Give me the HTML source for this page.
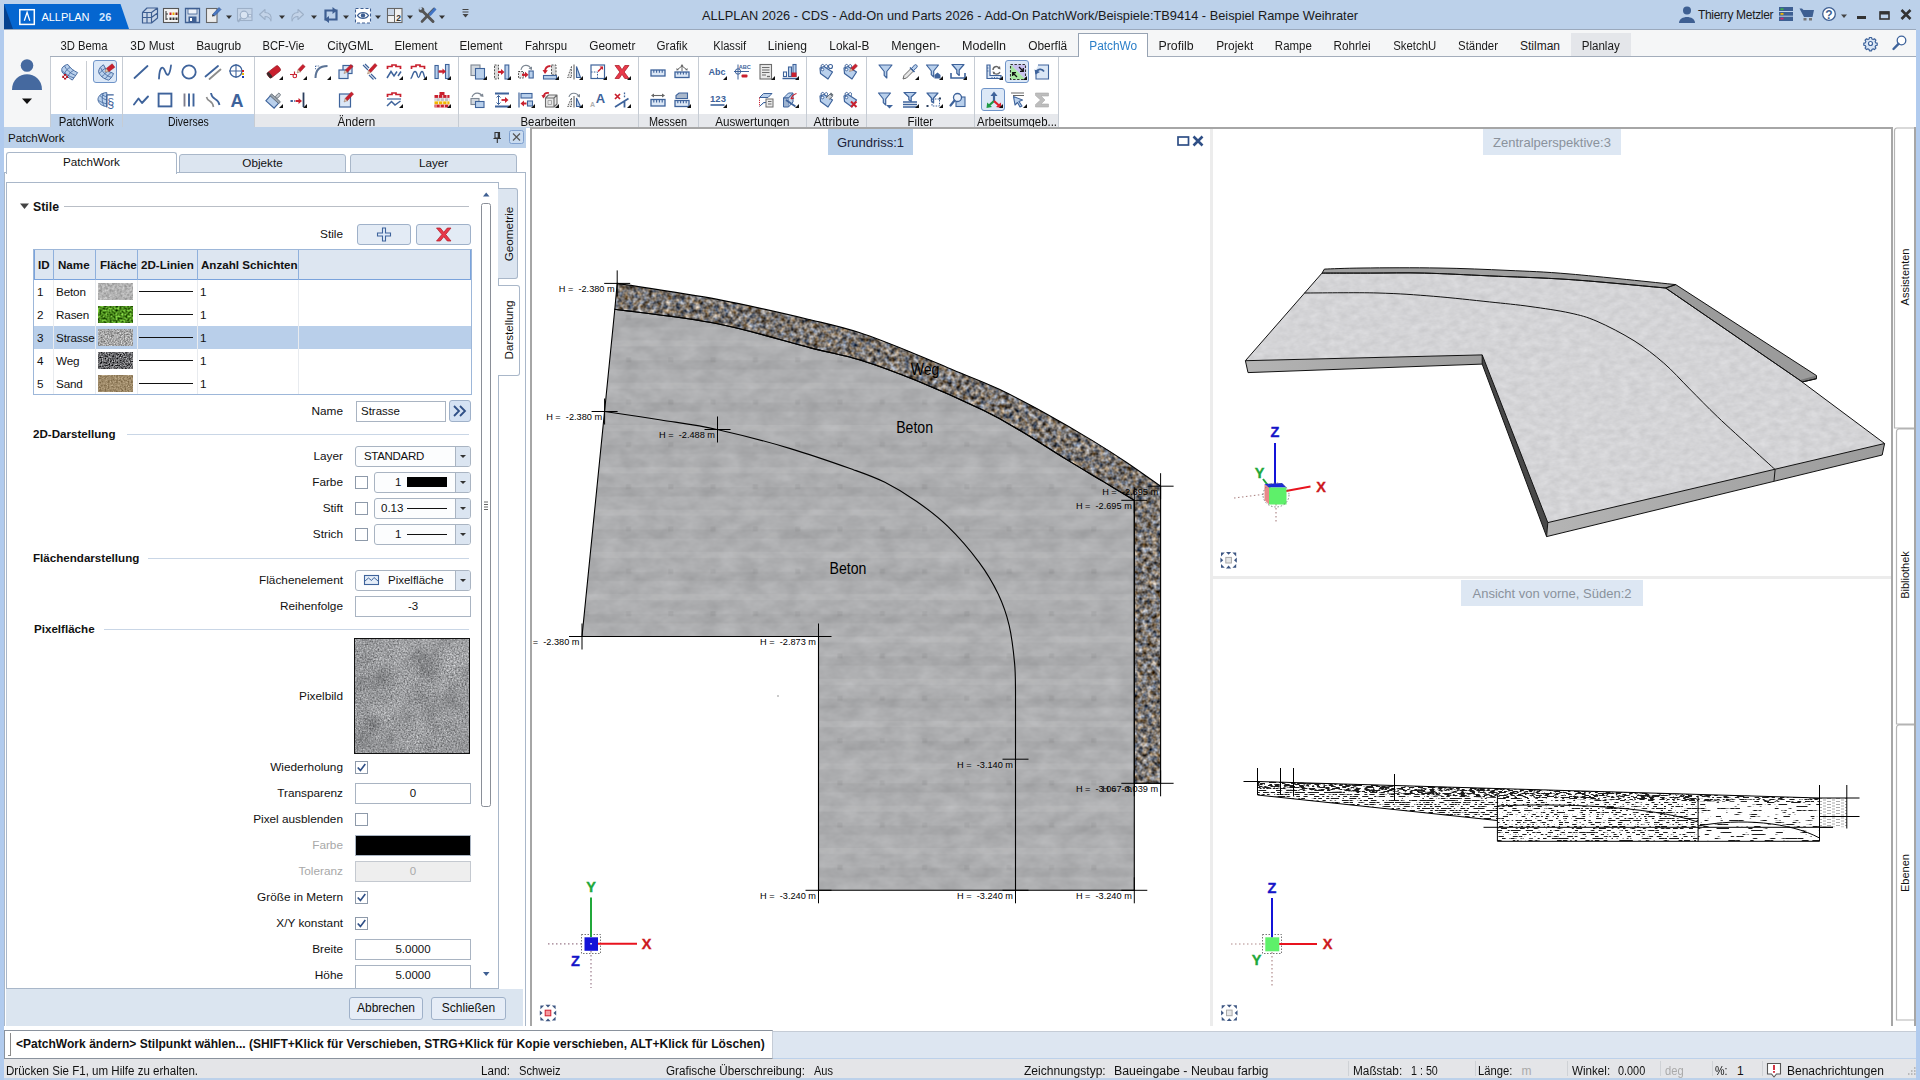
<!DOCTYPE html>
<html lang="de"><head><meta charset="utf-8"><title>ALLPLAN 2026</title>
<style>
*{box-sizing:border-box;margin:0;padding:0}
html,body{width:1920px;height:1080px;overflow:hidden}
body{position:relative;background:#bcd1ea;font-family:"Liberation Sans",sans-serif;font-size:11.7px;color:#111;line-height:14px}
.a{position:absolute}
.t{position:absolute;white-space:nowrap}
svg{position:absolute;overflow:visible}
svg.vp{overflow:hidden}
.tr{position:absolute;white-space:nowrap;font-size:11.7px;letter-spacing:-0.15px}
/* title */
#title{left:0;top:0;width:1920px;height:30px;background:#bcd1ea}
#ttxt{left:702px;top:9px;font-size:12.8px;color:#1a1a1a}
/* ribbon */
#tabs{left:4px;top:29px;width:1912px;height:28px;background:#f5f6f7;border-top:1px solid #9ba9bc}
.rt{position:absolute;top:39px;font-size:12px;white-space:nowrap;text-align:center;color:#1a1a1a}
#rib{left:4px;top:57px;width:1912px;height:70px;background:#fff}
.gl{position:absolute;top:114px;height:13px;background:#e6e8ec;font-size:12px;text-align:center;line-height:16px;white-space:nowrap;color:#111;overflow:visible}
.gs{position:absolute;top:57px;width:1px;height:70px;background:#c6ccd4}
/* panel */
.lbl{position:absolute;white-space:nowrap;text-align:right;width:160px;left:183px;font-size:11.8px;color:#111}
.inp{position:absolute;background:#fff;border:1px solid #a9b4c2;font-size:11.5px;text-align:center;line-height:19px;height:21px}
.cmb{position:absolute;background:#fcfdfe;border:1px solid #a9b4c2;border-radius:3px;font-size:11.5px;height:21px;line-height:19px}
.cmb i{position:absolute;right:0;top:0;width:15px;height:19px;background:#dbe5f1;border-left:1px solid #a9b4c2;border-radius:0 2px 2px 0}
.cmb i:after{content:"";position:absolute;left:4px;top:8px;border:3px solid transparent;border-top:3px solid #333;border-bottom:0}
.cb{position:absolute;width:13px;height:13px;border:1px solid #8e9aaa;background:#fff}
.hd{position:absolute;font-weight:bold;font-size:11.6px;white-space:nowrap;color:#111}
.hl{position:absolute;height:1px;background:#c9d6e6}
.btn{position:absolute;border:1px solid #9fb1c9;border-radius:3px;background:#e3ebf5;text-align:center;font-size:12px}
/* status */
.st{position:absolute;top:1064px;font-size:12px;white-space:nowrap;color:#111}
.vt{position:absolute;font-size:13px;white-space:nowrap;text-align:center;height:25.5px;line-height:27px}
</style></head><body>
<div class="a" id="title"></div>
<div class="a" style="left:0;top:30px;width:4px;height:1050px;background:#b1cbee"></div><div class="a" style="left:1916px;top:30px;width:4px;height:1050px;background:#b1cbee"></div>
<svg style="left:0;top:0" width="140" height="30" viewBox="0 0 140 30"><path d="M4 4 H120.500 L129 29 H4 Z" fill="#0566d0"/><path d="M4 4 L13 29 H4 Z" fill="#06428f"/><rect x="19.800" y="9.700" width="14.500" height="14.700" fill="none" stroke="#fff" stroke-width="1.500"/><path d="M24.300 20.700 L27.100 12.400 L29.800 20.700" fill="none" stroke="#fff" stroke-width="1.300"/><text x="41.500" y="20.800" font-family="Liberation Sans,sans-serif" font-size="11" fill="#fff" textLength="48" lengthAdjust="spacing">ALLPLAN</text><text x="99" y="20.800" font-family="Liberation Sans,sans-serif" font-size="11" font-weight="bold" fill="#d4e8ff" textLength="12.300" lengthAdjust="spacing">26</text></svg>
<svg style="left:0;top:0" width="500" height="30" viewBox="0 0 500 30"><path d="M142.500 12.500 H151.500 V23 H142.500 Z M142.500 12.500 L147 8 H157.500 V18 L151.500 23 M151.500 12.500 L157.500 8 M142.500 17.500 H151.500 M147 12.500 V23 M151.500 17.500 L157.500 13" fill="#c9d6e8" stroke="#3e5f92" stroke-width="1.2" stroke-linejoin="round"/><rect x="163.500" y="8.500" width="15" height="14" fill="#f4f4f4" stroke="#555" stroke-width="1.1"/><path d="M166 11 V20 M166 14 h2 M166 19 h2" stroke="#333" stroke-width="1"/><rect x="169.500" y="12.500" width="2" height="2.500" fill="#c22"/><rect x="172.500" y="12.500" width="2" height="2.500" fill="#e8a800"/><rect x="175.500" y="12.500" width="2" height="2.500" fill="#7a1b1b"/><rect x="169.500" y="17.500" width="2" height="2.500" fill="#333"/><rect x="172.500" y="17.500" width="2" height="2.500" fill="#333"/><rect x="175.500" y="17.500" width="2" height="2.500" fill="#333"/><path d="M185.500 8.500 H199.500 V22.500 H185.500 Z" fill="#c9d6e8" stroke="#3e5f92" stroke-width="1.3"/><rect x="188" y="9" width="9" height="5" fill="#eef2f8" stroke="#3e5f92" stroke-width=".8"/><rect x="188.500" y="16.500" width="8" height="6" fill="#3e5f92"/><rect x="190" y="18" width="2" height="3" fill="#fff"/><rect x="206.500" y="8.500" width="10.500" height="14" fill="#ececec" stroke="#666" stroke-width="1.1"/><path d="M212.500 14.500 L219 7.500 L221 9.500 L214.500 16 Z" fill="#4a78c2" stroke="#2b4f8d" stroke-width=".6"/><path d="M212 16.500 l.5 -2 l2 1.500 z" fill="#222"/><path d="M226 15.5 h6 l-3 3.5 z" fill="#333"/><rect x="237.500" y="8.500" width="14.500" height="12" fill="#c6d5e8" stroke="#9db0c8" stroke-width="1.1"/><circle cx="244" cy="15" r="3.800" fill="#d9e4f2" stroke="#9db0c8" stroke-width="1.2"/><path d="M241 18 L238 22" stroke="#9db0c8" stroke-width="2"/><rect x="248.500" y="14.500" width="3" height="2.500" fill="#d9e4f2" stroke="#9db0c8" stroke-width=".8"/><path d="M259.500 14.500 L265 9.500 V12.500 C270 12.500,272 16,271 21 C270 17.500,268 16.500,265 16.500 V19.500 Z" fill="#c3d3e8" stroke="#9db0c8" stroke-width="1.1" stroke-linejoin="round"/><path d="M279 15.5 h6 l-3 3.5 z" fill="#333"/><path d="M303.500 14.500 L298 9.500 V12.500 C293 12.500,291 16,292 21 C293 17.500,295 16.500,298 16.500 V19.500 Z" fill="#c3d3e8" stroke="#9db0c8" stroke-width="1.1" stroke-linejoin="round"/><path d="M311 15.5 h6 l-3 3.5 z" fill="#333"/><path d="M334 10.500 H325.500 V19.500 H328" fill="none" stroke="#3e5f92" stroke-width="2.200"/><path d="M327 19.500 H336 V10.500 H333" fill="none" stroke="#3e5f92" stroke-width="2.200" transform="translate(0.500 0)"/><path d="M332.500 7 L337 10.500 L332.500 14 Z M329 16 L324.500 19.500 L329 23 Z" fill="#3e5f92"/><path d="M343 15.5 h6 l-3 3.5 z" fill="#333"/><rect x="355.500" y="8.500" width="15" height="14.500" fill="#fff" stroke="#3e5f92" stroke-width="1.1" stroke-dasharray="3 2"/><path d="M357.500 15.500 C360 11.500,366 11.500,368.500 15.500 C366 19.500,360 19.500,357.500 15.500 Z" fill="none" stroke="#3e5f92" stroke-width="1.2"/><circle cx="363" cy="15.500" r="2.200" fill="#3e5f92"/><path d="M375 15.5 h6 l-3 3.5 z" fill="#333"/><rect x="387.500" y="8.500" width="14.500" height="14" fill="#f1f1f1" stroke="#666" stroke-width="1.1"/><path d="M394.500 8.500 V22.500 M387.500 15.500 H394.500" stroke="#666" stroke-width="1"/><rect x="388" y="9" width="6" height="6" fill="#c9d6e8"/><text x="398.500" y="21" font-family="Liberation Sans,sans-serif" font-size="8.500" font-weight="bold" text-anchor="middle" fill="#333">2</text><path d="M407 15.5 h6 l-3 3.5 z" fill="#333"/><path d="M420.500 9 L433 21.500" stroke="#555" stroke-width="3" stroke-linecap="round"/><path d="M434 9 L422 21.500" stroke="#555" stroke-width="2.600" stroke-linecap="round"/><path d="M428.500 14 L434.500 7.500 L436.500 9.500 L430.500 16 Z" fill="#3f73c4"/><circle cx="421.500" cy="10" r="2.800" fill="#555"/><circle cx="420.500" cy="8.500" r="1.400" fill="#bcd1ea"/><path d="M439 15.5 h6 l-3 3.5 z" fill="#333"/><path d="M462.500 9.500 H468.500 M462.500 12 H468.500" stroke="#444" stroke-width="1.1"/><path d="M462.5 14.0 h6 l-3 3.5 z" fill="#444"/></svg>
<div class="t" id="ttxt">ALLPLAN 2026 - CDS - Add-On und Parts 2026 - Add-On PatchWork/Beispiele:TB9414 - Beispiel Rampe Weihrater</div>
<svg style="left:1660px;top:0" width="260" height="30" viewBox="1660 0 260 30"><circle cx="1687" cy="10.500" r="4" fill="#3e5f92"/><path d="M1679 23 C1679 15,1695 15,1695 23 Z" fill="#3e5f92"/><rect x="1779" y="7" width="14" height="14" fill="#3e5f92"/><path d="M1779 11.500 H1793 M1779 16.200 H1793" stroke="#bcd1ea" stroke-width="1"/><rect x="1780.500" y="8.300" width="3" height="1.800" fill="#3fae49"/><rect x="1780.500" y="13" width="3" height="1.800" fill="#f0b400"/><rect x="1780.500" y="17.700" width="3" height="1.800" fill="#d6246e"/><path d="M1799.500 8.500 H1802 L1803.500 10 H1814 L1812.500 17 H1804 Z" fill="#3e5f92"/><rect x="1803.500" y="18" width="3" height="2.500" fill="#777"/><rect x="1809" y="18" width="3" height="2.500" fill="#777"/><circle cx="1829" cy="14" r="6.300" fill="#fff" stroke="#3e5f92" stroke-width="1.300"/><text x="1829" y="18.500" font-family="Liberation Sans,sans-serif" font-size="12" font-weight="bold" text-anchor="middle" fill="#3e5f92">?</text><path d="M1841 14.5 h6 l-3 3.5 z" fill="#444"/><rect x="1857" y="16" width="9" height="3" fill="#333"/><rect x="1880" y="12" width="9" height="7" fill="none" stroke="#333" stroke-width="1.600"/><rect x="1880" y="11.500" width="9" height="3" fill="#333"/><path d="M1901.500 10 L1910.500 19 M1910.500 10 L1901.500 19" stroke="#333" stroke-width="2.600"/></svg>
<div class="t" style="left:1698px;top:8px;font-size:12px;letter-spacing:-0.32px;color:#1a1a1a">Thierry Metzler</div>
<div class="a" id="tabs"></div>
<div class="a" style="left:50px;top:56px;width:1866px;height:1px;background:#a3adbb"></div>
<div class="a" style="left:1571px;top:33px;width:60px;height:23px;background:#e4e6ea"></div>
<div class="a" style="left:1078px;top:33px;width:70px;height:24px;background:#fff;border:1px solid #97a3b3;border-bottom:0"></div>
<div class="rt" style="left:41px;width:87px"><span style="display:inline-block;transform:scaleX(0.940)">3D Bema</span></div>
<div class="rt" style="left:110px;width:84px"><span style="display:inline-block;transform:scaleX(0.985)">3D Must</span></div>
<div class="rt" style="left:176px;width:85px"><span style="display:inline-block;transform:scaleX(0.992)">Baugrub</span></div>
<div class="rt" style="left:243px;width:82px"><span style="display:inline-block;transform:scaleX(0.931)">BCF-Vie</span></div>
<div class="rt" style="left:307px;width:86px"><span style="display:inline-block;transform:scaleX(0.986)">CityGML</span></div>
<div class="rt" style="left:375px;width:83px"><span style="display:inline-block;transform:scaleX(0.977)">Element</span></div>
<div class="rt" style="left:440px;width:83px"><span style="display:inline-block;transform:scaleX(0.977)">Element</span></div>
<div class="rt" style="left:505px;width:82px"><span style="display:inline-block;transform:scaleX(0.954)">Fahrspu</span></div>
<div class="rt" style="left:569px;width:86px"><span style="display:inline-block;transform:scaleX(0.985)">Geometr</span></div>
<div class="rt" style="left:637px;width:71px"><span style="display:inline-block;transform:scaleX(0.969)">Grafik</span></div>
<div class="rt" style="left:693px;width:73px"><span style="display:inline-block;transform:scaleX(0.934)">Klassif</span></div>
<div class="rt" style="left:748px;width:79px"><span style="display:inline-block;transform:scaleX(1.008)">Linieng</span></div>
<div class="rt" style="left:809px;width:80px"><span style="display:inline-block;transform:scaleX(0.983)">Lokal-B</span></div>
<div class="rt" style="left:871px;width:89px"><span style="display:inline-block;transform:scaleX(1.035)">Mengen-</span></div>
<div class="rt" style="left:942px;width:84px"><span style="display:inline-block;transform:scaleX(1.047)">Modelln</span></div>
<div class="rt" style="left:1008px;width:79px"><span style="display:inline-block;transform:scaleX(0.991)">Oberflä</span></div>
<div class="rt" style="left:1069px;width:88px;color:#2a7ec8"><span style="display:inline-block;transform:scaleX(0.990)">PatchWo</span></div>
<div class="rt" style="left:1139px;width:75px"><span style="display:inline-block;transform:scaleX(1.029)">Profilb</span></div>
<div class="rt" style="left:1196px;width:77px"><span style="display:inline-block;transform:scaleX(0.991)">Projekt</span></div>
<div class="rt" style="left:1255px;width:77px"><span style="display:inline-block;transform:scaleX(0.956)">Rampe</span></div>
<div class="rt" style="left:1314px;width:77px"><span style="display:inline-block;transform:scaleX(0.973)">Rohrlei</span></div>
<div class="rt" style="left:1373px;width:83px"><span style="display:inline-block;transform:scaleX(0.948)">SketchU</span></div>
<div class="rt" style="left:1438px;width:80px"><span style="display:inline-block;transform:scaleX(0.952)">Ständer</span></div>
<div class="rt" style="left:1500px;width:80px"><span style="display:inline-block;transform:scaleX(1.000)">Stilman</span></div>
<div class="rt" style="left:1562px;width:78px"><span style="display:inline-block;transform:scaleX(0.966)">Planlay</span></div>
<svg style="left:1860px;top:33px" width="52" height="22" viewBox="1860 33 52 22"><g fill="#dbe7f6" stroke="#3e639b" stroke-width="1.400" transform="translate(1870.500 43.500) scale(.86) translate(-1870.500 -43.500)"><path d="M1869.300 36.500 h2.400 l.4 1.700 l1.500 .7 l1.500 -.9 l1.700 1.700 l-.9 1.500 l.7 1.500 l1.700 .4 v2.400 l-1.700 .4 l-.7 1.500 l.9 1.500 l-1.700 1.700 l-1.500 -.9 l-1.500 .7 l-.4 1.700 h-2.400 l-.4 -1.700 l-1.500 -.7 l-1.500 .9 l-1.700 -1.700 l.9 -1.500 l-.7 -1.500 l-1.700 -.4 v-2.400 l1.700 -.4 l.7 -1.500 l-.9 -1.500 l1.700 -1.700 l1.500 .9 l1.500 -.7 z" stroke-linejoin="round"/><circle cx="1870.500" cy="43.500" r="2.300" fill="#fff"/></g><circle cx="1901.500" cy="40.500" r="4.300" fill="#fff" stroke="#3e639b" stroke-width="1.300"/><path d="M1898.500 43.800 L1893.500 49" stroke="#3e639b" stroke-width="2.400" stroke-linecap="round"/></svg>
<div class="a" id="rib"></div>
<div class="a" style="left:4px;top:57px;width:46px;height:70px;background:#f5f6f7"></div>
<svg style="left:4px;top:58px" width="46" height="69" viewBox="4 58 46 69"><circle cx="27" cy="65.500" r="6.300" fill="#45699f"/><path d="M12 90 C12 69,42 69,42 90 Z" fill="#45699f"/><path d="M22 98.500 H32 L27 104 Z" fill="#111"/></svg>
<div class="gl" style="left:50px;width:72px;background:#bcd1ea"><span style="display:inline-block;transform:scaleX(0.944)">PatchWork</span></div>
<div class="gs" style="left:122px"></div>
<div class="gl" style="left:123px;width:131px;background:#bcd1ea"><span style="display:inline-block;transform:scaleX(0.874)">Diverses</span></div>
<div class="gs" style="left:254px"></div>
<div class="gl" style="left:255px;width:203px"><span style="display:inline-block;transform:scaleX(0.969)">Ändern</span></div>
<div class="gs" style="left:458px"></div>
<div class="gl" style="left:459px;width:179px"><span style="display:inline-block;transform:scaleX(0.948)">Bearbeiten</span></div>
<div class="gs" style="left:638px"></div>
<div class="gl" style="left:639px;width:59px"><span style="display:inline-block;transform:scaleX(0.907)">Messen</span></div>
<div class="gs" style="left:698px"></div>
<div class="gl" style="left:699px;width:107px"><span style="display:inline-block;transform:scaleX(0.970)">Auswertungen</span></div>
<div class="gs" style="left:806px"></div>
<div class="gl" style="left:807px;width:59px"><span style="display:inline-block;transform:scaleX(1.023)">Attribute</span></div>
<div class="gs" style="left:866px"></div>
<div class="gl" style="left:867px;width:107px"><span style="display:inline-block;transform:scaleX(0.960)">Filter</span></div>
<div class="gs" style="left:974px"></div>
<div class="gl" style="left:975px;width:83px"><span style="display:inline-block;transform:scaleX(0.952)">Arbeitsumgeb...</span></div>
<div class="gs" style="left:1058px"></div>
<div class="gs" style="left:50px"></div>
<div class="gs" style="left:86px;top:61px;height:49px;background:#c9cdd3"></div>
<div class="a" style="left:93px;top:60px;width:24px;height:23px;background:#dce8f7;border:1px solid #6f94c8;border-radius:3px"></div>
<div class="a" style="left:1005px;top:60px;width:24px;height:23px;background:#dce8f7;border:1px solid #6f94c8;border-radius:3px"></div>
<div class="a" style="left:981px;top:88px;width:24px;height:23px;background:#dce8f7;border:1px solid #6f94c8;border-radius:3px"></div>
<svg style="left:57.8px;top:61.5px" width="20.0" height="20.0" viewBox="0 0 20 20"><path d="M3.9 6.5 C5 4,8 2.5,9.9 2.5 C12 6,16 9,19.6 10.6 C18 13,16 16,14.3 18.1 C11 16,7 13,4.9 11.2 C3.5 9.500,3.5 8,3.9 6.5 Z" fill="#b9d0ec" stroke="#3e639b" stroke-width=".9"/><path d="M6.5 4 C8.500 8,12.500 11.500,17.500 13.500 M4.2 8.800 C7 11.500,11 14.500,16 16 M6.200 12.300 C7.500 9,9.500 6,12.300 5.500 M9.500 14.800 C11 12,13 9.500,15.800 8.300" fill="none" stroke="#3e639b" stroke-width=".8"/><path d="M4.300 14.800 H9.900 M7.100 12 V17.600" stroke="#b5121f" stroke-width="2.200"/><rect x="6.100" y="13.800" width="2" height="2" fill="#fff"/></svg>
<svg style="left:95.8px;top:61.5px" width="20.0" height="20.0" viewBox="0 0 20 20"><path d="M2.500 9.500 C3 6.500,5 4,7.500 2.800 L10.500 8.500 L17.500 11.500 C16.500 14.500,14.500 17,12.700 18.100 C7.500 17,3.500 13.500,2.500 9.500 Z" fill="#b9d0ec" stroke="#3e639b" stroke-width=".9"/><path d="M4.500 5.500 C6.500 10.500,10.500 14,15.500 15.500 M3.200 11.500 C5.500 8.500,8 7.500,9.300 6.200 M6 14.800 C8 12,10 10.500,12 9.200 M9.200 16.800 C11 14.500,13 12.500,15 10.500" fill="none" stroke="#3e639b" stroke-width=".8"/><path d="M12.8 9.7 L18.8 5.2 L16.2 1.8 L10.3 6.4 Z" fill="#c9202e" stroke="#9a1622" stroke-width=".5"/><path d="M9.0 10.0 L12.8 9.7 L10.3 6.4 Z" fill="#e9c9b0" stroke="#7a5540" stroke-width=".4"/></svg>
<svg style="left:95.8px;top:89.5px" width="20.0" height="20.0" viewBox="0 0 20 20"><path d="M10.800 2.600 C5 2.600,1.500 7,2 10 C2.500 13.500,6.500 16.500,10.800 16.500 Z" fill="#b9d0ec" stroke="#3e639b" stroke-width=".9"/><path d="M7.500 3.200 C5.500 7,6 12,8 16 M4 5.500 C6 8,8.500 9.500,10.800 10 M2.500 10.500 C5 12,8 13.500,10.800 13.800 M5.500 4 C7 5.500,9 6.500,10.800 6.800" fill="none" stroke="#3e639b" stroke-width=".8"/><path d="M10.800 4.800 V17.500 M10.800 4.800 H17.700" fill="none" stroke="#3e639b" stroke-width="1.200"/><text x="14.700" y="16.500" font-family="Liberation Sans,sans-serif" font-size="12.500" text-anchor="middle" fill="#3e639b">§</text></svg>
<svg style="left:130.8px;top:61.5px" width="20.0" height="20.0" viewBox="0 0 20 20"><path d="M3.5 16 L16.5 4" stroke="#3e639b" stroke-width="1.8" stroke-linecap="round"/></svg>
<svg style="left:154.8px;top:61.5px" width="20.0" height="20.0" viewBox="0 0 20 20"><path d="M4 16.5 C4.5 4,8 3.5,10 9 S14.5 15,16 3.5" fill="none" stroke="#3e639b" stroke-width="1.8" stroke-linecap="round"/></svg>
<svg style="left:178.8px;top:61.5px" width="20.0" height="20.0" viewBox="0 0 20 20"><circle cx="10" cy="10" r="6.7" fill="none" stroke="#3e639b" stroke-width="1.8"/></svg>
<svg style="left:202.8px;top:61.5px" width="20.0" height="20.0" viewBox="0 0 20 20"><path d="M2.5 14.5 L15 4" stroke="#3e639b" stroke-width="1.8" stroke-linecap="round"/><path d="M6.5 17 L17.5 7.5" stroke="#8c8c8c" stroke-width="1.8" stroke-linecap="round"/></svg>
<svg style="left:226.8px;top:61.5px" width="20.0" height="20.0" viewBox="0 0 20 20"><circle cx="9" cy="9" r="6" fill="none" stroke="#3e639b" stroke-width="1.3"/><path d="M9 2 V16 M2 9 H16" stroke="#3e639b" stroke-width="1.1"/><rect x="15" y="8" width="2" height="2" fill="#c9202e"/><rect x="15" y="11" width="2" height="2" fill="#e8b400"/><rect x="15" y="14" width="2" height="2" fill="#1b3fb0"/></svg>
<svg style="left:130.8px;top:89.5px" width="20.0" height="20.0" viewBox="0 0 20 20"><path d="M3 14.5 L7.5 8.5 L11 13 L17 6.5" fill="none" stroke="#3e639b" stroke-width="1.9" stroke-linejoin="round" stroke-linecap="round"/></svg>
<svg style="left:154.8px;top:89.5px" width="20.0" height="20.0" viewBox="0 0 20 20"><rect x="3.6" y="3.6" width="12.8" height="12.8" fill="none" stroke="#3e639b" stroke-width="1.9"/></svg>
<svg style="left:178.8px;top:89.5px" width="20.0" height="20.0" viewBox="0 0 20 20"><path d="M10 3.5 V16.5 M14.5 3.5 V16.5" stroke="#3e639b" stroke-width="1.9"/><path d="M5.5 3.5 V16.5" stroke="#7d7d8c" stroke-width="1.9"/></svg>
<svg style="left:202.8px;top:89.5px" width="20.0" height="20.0" viewBox="0 0 20 20"><path d="M3.5 7 C5 13,9 9,10.5 17" fill="none" stroke="#8c8c8c" stroke-width="1.6"/><path d="M8 3 C9 11,15 7,16.5 15" fill="none" stroke="#3e639b" stroke-width="1.8"/></svg>
<svg style="left:226.8px;top:89.5px" width="20.0" height="20.0" viewBox="0 0 20 20"><text x="10" y="17" font-family="Liberation Sans,sans-serif" font-weight="bold" font-size="18" text-anchor="middle" fill="#3e639b">A</text></svg>
<svg style="left:263.8px;top:61.5px" width="20.0" height="20.0" viewBox="0 0 20 20"><g transform="rotate(-38 10 10)"><rect x="3" y="6.5" width="14" height="6.5" rx="2" fill="#c9202e" stroke="#8e1420" stroke-width=".6"/><rect x="3" y="6.5" width="3" height="6.5" rx="1" fill="#3a2a2a"/></g><path d="M19 14 V18 H15 Z" fill="#111"/></svg>
<svg style="left:287.8px;top:61.5px" width="20.0" height="20.0" viewBox="0 0 20 20"><path d="M12.4 9.8 L17.2 4.6 L14.8 2.4 L10.0 7.6 Z" fill="#c9202e" stroke="#9a1622" stroke-width=".5"/><path d="M9.0 11.0 L12.4 9.8 L10.0 7.6 Z" fill="#e9c9b0" stroke="#7a5540" stroke-width=".4"/><path d="M2 12.5 H9 M6.5 9.5 V12" stroke="#c9202e" stroke-width="1.2"/><circle cx="6.8" cy="14" r="1.8" fill="#fff" stroke="#c9202e" stroke-width="1.1"/><path d="M19 14 V18 H15 Z" fill="#111"/></svg>
<svg style="left:311.8px;top:61.5px" width="20.0" height="20.0" viewBox="0 0 20 20"><path d="M3.5 16 C3.5 8,8 4,15.5 4" fill="none" stroke="#5b7396" stroke-width="2"/><path d="M3.5 4 H8 M3.5 4 V8" stroke="#3e639b" stroke-width="1" stroke-dasharray="1 1.2"/><path d="M19 14 V18 H15 Z" fill="#111"/></svg>
<svg style="left:335.8px;top:61.5px" width="20.0" height="20.0" viewBox="0 0 20 20"><rect x="7" y="3.5" width="9" height="8" fill="#dbe7f6" stroke="#3e639b" stroke-width="1.2"/><rect x="3" y="8" width="9" height="8.5" fill="#dbe7f6" stroke="#3e639b" stroke-width="1.2"/><path d="M11.3 10.3 L17.1 4.6 L14.9 2.4 L9.2 8.2 Z" fill="#c9202e" stroke="#9a1622" stroke-width=".5"/><path d="M8.0 11.5 L11.3 10.3 L9.2 8.2 Z" fill="#e9c9b0" stroke="#7a5540" stroke-width=".4"/></svg>
<svg style="left:359.8px;top:61.5px" width="20.0" height="20.0" viewBox="0 0 20 20"><path d="M3 3 L8 8 M5 2 L9 6 M11 12 L16 17 M9 13 L13.5 17.5" stroke="#3e639b" stroke-width="1.2"/><path d="M10.8 10.6 L17.1 3.5 L14.9 1.5 L8.5 8.6 Z" fill="#c9202e" stroke="#9a1622" stroke-width=".5"/><path d="M7.5 12.0 L10.8 10.6 L8.5 8.6 Z" fill="#e9c9b0" stroke="#7a5540" stroke-width=".4"/></svg>
<svg style="left:383.8px;top:61.5px" width="20.0" height="20.0" viewBox="0 0 20 20"><path d="M3.5 7.0 V4.5 H8 V3.0 H12 V4.5 H16.5 V7.0" fill="none" stroke="#c9202e" stroke-width="1.7"/><path d="M3 16 L7 9.5 L10 14 L13 9.5 M14 14 L17 9.5" fill="none" stroke="#3e639b" stroke-width="1.5"/><path d="M19 14 V18 H15 Z" fill="#111"/></svg>
<svg style="left:407.8px;top:61.5px" width="20.0" height="20.0" viewBox="0 0 20 20"><path d="M3.5 7.0 V4.5 H8 V3.0 H12 V4.5 H16.5 V7.0" fill="none" stroke="#c9202e" stroke-width="1.7"/><path d="M2.5 16.5 C4.5 16.5,4.5 9.5,7 9.5 S9 15.5,10.5 15.5 S12 9.5,14 9.5 S16 16.5,17.5 16.5" fill="none" stroke="#3e639b" stroke-width="1.4"/><path d="M19 14 V18 H15 Z" fill="#111"/></svg>
<svg style="left:431.8px;top:61.5px" width="20.0" height="20.0" viewBox="0 0 20 20"><rect x="3" y="3.5" width="3.2" height="13" fill="#b9d0ec" stroke="#3e639b" stroke-width="1.1"/><rect x="13.5" y="2.5" width="3.5" height="14" fill="#b9d0ec" stroke="#3e639b" stroke-width="1.1"/><path d="M6.5 9.5 H11.5" stroke="#c9202e" stroke-width="2.4"/><path d="M10.5 6.5 L14 9.5 L10.5 12.5 Z" fill="#c9202e"/><path d="M19 14 V18 H15 Z" fill="#111"/></svg>
<svg style="left:263.8px;top:89.5px" width="20.0" height="20.0" viewBox="0 0 20 20"><g transform="rotate(42 10 10)"><rect x="4.5" y="9" width="11" height="7" fill="#b9d0ec" stroke="#3e639b" stroke-width="1.1"/><rect x="4" y="7" width="12" height="2.5" fill="#9aa3ad" stroke="#5c6670" stroke-width=".7"/><rect x="8.7" y="1.5" width="2.8" height="5.5" rx="1.2" fill="#c8ccd2" stroke="#5c6670" stroke-width=".8"/></g><path d="M19 14 V18 H15 Z" fill="#111"/></svg>
<svg style="left:287.8px;top:89.5px" width="20.0" height="20.0" viewBox="0 0 20 20"><path d="M2.5 11 H7" stroke="#3e639b" stroke-width="1.8" stroke-dasharray="2.4 1.4"/><path d="M7.5 11 H11.5" stroke="#c9202e" stroke-width="2"/><path d="M10.5 8 L14 11 L10.5 14 Z" fill="#c9202e"/><path d="M15.5 2.5 V17" stroke="#2b3f5e" stroke-width="1.8"/><path d="M19 14 V18 H15 Z" fill="#111"/></svg>
<svg style="left:335.8px;top:89.5px" width="20.0" height="20.0" viewBox="0 0 20 20"><rect x="3.5" y="4" width="11" height="13" fill="#dbe7f6" stroke="#3e639b" stroke-width="1.2"/><path d="M11.3 10.7 L17.6 4.0 L15.4 2.0 L9.1 8.6 Z" fill="#c9202e" stroke="#9a1622" stroke-width=".5"/><path d="M8.0 12.0 L11.3 10.7 L9.1 8.6 Z" fill="#e9c9b0" stroke="#7a5540" stroke-width=".4"/></svg>
<svg style="left:383.8px;top:89.5px" width="20.0" height="20.0" viewBox="0 0 20 20"><path d="M3.5 7.0 V4.5 H8 V3.0 H12 V4.5 H16.5 V7.0" fill="none" stroke="#c9202e" stroke-width="1.7"/><path d="M3 9 H17" stroke="#3e639b" stroke-width="1.2"/><path d="M3 16 L7.5 11.5 L11 15 L16.5 11" fill="none" stroke="#3e639b" stroke-width="1.5"/><path d="M19 14 V18 H15 Z" fill="#111"/></svg>
<svg style="left:431.8px;top:89.5px" width="20.0" height="20.0" viewBox="0 0 20 20"><rect x="2.5" y="5.0" width="15" height="2.9" fill="#c9202e"/><path d="M6.5 5.0 v2.9" stroke="#fff" stroke-width=".8"/><path d="M10.7 5.0 v2.9" stroke="#fff" stroke-width=".8"/><path d="M14.9 5.0 v2.9" stroke="#fff" stroke-width=".8"/><path d="M19.1 5.0 v2.9" stroke="#fff" stroke-width=".8"/><rect x="2.5" y="8.2" width="15" height="2.9" fill="#bfc3c9"/><path d="M4.0 8.2 v2.9" stroke="#fff" stroke-width=".8"/><path d="M8.2 8.2 v2.9" stroke="#fff" stroke-width=".8"/><path d="M12.4 8.2 v2.9" stroke="#fff" stroke-width=".8"/><path d="M16.6 8.2 v2.9" stroke="#fff" stroke-width=".8"/><rect x="2.5" y="11.4" width="15" height="2.9" fill="#f0b400"/><path d="M6.5 11.4 v2.9" stroke="#fff" stroke-width=".8"/><path d="M10.7 11.4 v2.9" stroke="#fff" stroke-width=".8"/><path d="M14.9 11.4 v2.9" stroke="#fff" stroke-width=".8"/><path d="M19.1 11.4 v2.9" stroke="#fff" stroke-width=".8"/><rect x="2.5" y="14.600000000000001" width="15" height="2.9" fill="#c9202e"/><path d="M4.0 14.600000000000001 v2.9" stroke="#fff" stroke-width=".8"/><path d="M8.2 14.600000000000001 v2.9" stroke="#fff" stroke-width=".8"/><path d="M12.4 14.600000000000001 v2.9" stroke="#fff" stroke-width=".8"/><path d="M16.6 14.600000000000001 v2.9" stroke="#fff" stroke-width=".8"/><rect x="7.5" y="2" width="5" height="3" fill="#c9202e"/><path d="M19 14 V18 H15 Z" fill="#111"/></svg>
<svg style="left:467.8px;top:61.5px" width="20.0" height="20.0" viewBox="0 0 20 20"><rect x="3" y="3" width="9" height="10.5" fill="#d3d8de" stroke="#7d8793" stroke-width="1.1"/><rect x="7.5" y="6.5" width="9" height="10.5" fill="#b9d0ec" stroke="#3e639b" stroke-width="1.1"/><path d="M19 14 V18 H15 Z" fill="#111"/></svg>
<svg style="left:491.8px;top:61.5px" width="20.0" height="20.0" viewBox="0 0 20 20"><rect x="2.5" y="3" width="4" height="14" fill="#d9d9d9" stroke="#555" stroke-width="1" stroke-dasharray="2 1.3"/><rect x="13" y="3" width="3.8" height="14" fill="#b9d0ec" stroke="#3e639b" stroke-width="1.1"/><path d="M6 10 H10.0" stroke="#c9202e" stroke-width="2.2"/><path d="M9.0 7 L12.5 10 L9.0 13 Z" fill="#c9202e"/><path d="M19 14 V18 H15 Z" fill="#111"/></svg>
<svg style="left:515.8px;top:61.5px" width="20.0" height="20.0" viewBox="0 0 20 20"><path d="M5 8 C6 2,13 2,15 7" fill="none" stroke="#7d8793" stroke-width="1.1"/><path d="M12.5 6.5 L16 8 L16 4.5 Z" fill="#7d8793"/><rect x="2.5" y="9.5" width="5" height="6.5" fill="#e6e6e6" stroke="#444" stroke-width="1" stroke-dasharray="1.6 1.2"/><rect x="13" y="9" width="4.2" height="7" fill="#b9d0ec" stroke="#3e639b" stroke-width="1.1"/><path d="M6 12.8 H10.0" stroke="#c9202e" stroke-width="2.2"/><path d="M9.0 9.8 L12.5 12.8 L9.0 15.8 Z" fill="#c9202e"/></svg>
<svg style="left:539.8px;top:61.5px" width="20.0" height="20.0" viewBox="0 0 20 20"><rect x="11.5" y="3" width="4.5" height="10" fill="#d9d9d9" stroke="#555" stroke-width="1" stroke-dasharray="2 1.3"/><rect x="3.5" y="13.5" width="13" height="3.5" fill="#b9d0ec" stroke="#3e639b" stroke-width="1.1"/><path d="M10.5 4 C7 4,5 6.5,5 10" fill="none" stroke="#c9202e" stroke-width="1.8"/><path d="M2.5 8 L5 12 L7.8 8.3 Z" fill="#c9202e"/><path d="M19 14 V18 H15 Z" fill="#111"/></svg>
<svg style="left:563.8px;top:61.5px" width="20.0" height="20.0" viewBox="0 0 20 20"><path d="M10 2.5 V17.5" stroke="#555" stroke-width="1"/><path d="M7.5 4.5 V15.5 H3.5 Z" fill="#ddd" stroke="#666" stroke-width="1" stroke-dasharray="1.6 1.2"/><path d="M12.5 4.5 V15.5 H16.5 Z" fill="#b9d0ec" stroke="#3e639b" stroke-width="1.1"/><path d="M19 14 V18 H15 Z" fill="#111"/></svg>
<svg style="left:587.8px;top:61.5px" width="20.0" height="20.0" viewBox="0 0 20 20"><rect x="3" y="3" width="13.5" height="13.5" fill="#fff" stroke="#3e639b" stroke-width="1.2"/><path d="M3 10 H9.5 V16.5" fill="none" stroke="#3e639b" stroke-width="1" stroke-dasharray="1.6 1.2"/><path d="M10 9.5 L14.5 5" stroke="#c9202e" stroke-width="1.5"/><path d="M11.5 4.5 H15 V8 Z" fill="#c9202e"/><path d="M19 14 V18 H15 Z" fill="#111"/></svg>
<svg style="left:611.8px;top:61.5px" width="20.0" height="20.0" viewBox="0 0 20 20"><path d="M3 3.5 H7.2 L10 7.7 L12.8 3.5 H17 L12.2 10 L17 16.5 H12.8 L10 12.3 L7.2 16.5 H3 L7.8 10 Z" fill="#e8394a" stroke="#a5131f" stroke-width=".7"/><path d="M19 14 V18 H15 Z" fill="#111"/></svg>
<svg style="left:467.8px;top:89.5px" width="20.0" height="20.0" viewBox="0 0 20 20"><path d="M4 7 C6 2,12 2,14 6" fill="none" stroke="#7d8793" stroke-width="1.1"/><path d="M11.5 6 L15.5 7 L15 3.5 Z" fill="#7d8793"/><rect x="3" y="8.5" width="8" height="6" fill="#d3d8de" stroke="#7d8793" stroke-width="1.1"/><rect x="7.5" y="11.5" width="8.5" height="6" fill="#b9d0ec" stroke="#3e639b" stroke-width="1.1"/></svg>
<svg style="left:491.8px;top:89.5px" width="20.0" height="20.0" viewBox="0 0 20 20"><path d="M3 3.5 H17 M3 16.5 H17" stroke="#3e639b" stroke-width="1.8"/><path d="M6.5 5.5 V14.5 M4.5 7.5 L6.5 5.5 L8.5 7.5 M4.5 12.5 L6.5 14.5 L8.5 12.5" fill="none" stroke="#3e639b" stroke-width="1"/><path d="M9.5 10 H14.0" stroke="#c9202e" stroke-width="1.8"/><path d="M13.0 7 L16.5 10 L13.0 13 Z" fill="#c9202e"/><path d="M19 14 V18 H15 Z" fill="#111"/></svg>
<svg style="left:515.8px;top:89.5px" width="20.0" height="20.0" viewBox="0 0 20 20"><path d="M3 2.5 V17.5" stroke="#3e639b" stroke-width="1.2"/><rect x="5" y="3.5" width="11" height="4.5" fill="#b9d0ec" stroke="#3e639b" stroke-width="1.1"/><rect x="11.5" y="11" width="5" height="5" fill="#b9d0ec" stroke="#3e639b" stroke-width="1.1"/><path d="M10.5 13.5 H7" stroke="#c9202e" stroke-width="2"/><path d="M8 10.5 L4.5 13.5 L8 16.5 Z" fill="#c9202e"/><path d="M19 14 V18 H15 Z" fill="#111"/></svg>
<svg style="left:539.8px;top:89.5px" width="20.0" height="20.0" viewBox="0 0 20 20"><path d="M5.5 8 H14 V17 H5.5 Z M5.5 8 L8.5 5 H17 V14 L14 17 M14 8 L17 5" fill="#e8e8e8" stroke="#6d6d6d" stroke-width="1.1" stroke-linejoin="round"/><path d="M8 10.5 H11.5 V14.5 H8 Z" fill="none" stroke="#9a9a9a" stroke-width=".8"/><path d="M9 3 C6 2.5,4 4,3.5 6.5" fill="none" stroke="#c9202e" stroke-width="1.6"/><path d="M1.5 5 L3.3 8.5 L6 5.5 Z" fill="#c9202e"/><path d="M19 14 V18 H15 Z" fill="#111"/></svg>
<svg style="left:563.8px;top:89.5px" width="20.0" height="20.0" viewBox="0 0 20 20"><path d="M5 7 C6 2,13 2,15 6.5" fill="none" stroke="#7d8793" stroke-width="1.1"/><path d="M12.5 6 L16 7.5 L16 4 Z" fill="#7d8793"/><path d="M10 6 V17.5" stroke="#555" stroke-width="1"/><path d="M7.5 8 V16.5 H3.5 Z" fill="#ddd" stroke="#666" stroke-width="1" stroke-dasharray="1.6 1.2"/><path d="M12.5 8 V16.5 H16.5 Z" fill="#b9d0ec" stroke="#3e639b" stroke-width="1.1"/><path d="M19 14 V18 H15 Z" fill="#111"/></svg>
<svg style="left:587.8px;top:89.5px" width="20.0" height="20.0" viewBox="0 0 20 20"><text x="4.5" y="17" font-family="Liberation Sans,sans-serif" font-weight="bold" font-size="7" text-anchor="middle" fill="#b0b0b0">A</text><text x="12.5" y="13" font-family="Liberation Sans,sans-serif" font-weight="bold" font-size="13" text-anchor="middle" fill="#3e639b">A</text></svg>
<svg style="left:611.8px;top:89.5px" width="20.0" height="20.0" viewBox="0 0 20 20"><path d="M3 4 L8 9 M8 4 L3 9" stroke="#c9202e" stroke-width="1.7"/><path d="M12.5 2.5 V8" stroke="#3e639b" stroke-width="1.3" stroke-dasharray="1.8 1.2"/><path d="M3 17 L16.5 8.5 M12.5 11.5 V17.5" stroke="#3e639b" stroke-width="1.8"/><path d="M19 14 V18 H15 Z" fill="#111"/></svg>
<svg style="left:647.8px;top:61.5px" width="20.0" height="20.0" viewBox="0 0 20 20"><rect x="3" y="8" width="14" height="6" fill="#dbe7f6" stroke="#3e639b" stroke-width="1.3"/><path d="M5.8 8 v2.7" stroke="#3e639b" stroke-width="1.1"/><path d="M8.6 8 v2.7" stroke="#3e639b" stroke-width="1.1"/><path d="M11.4 8 v2.7" stroke="#3e639b" stroke-width="1.1"/><path d="M14.2 8 v2.7" stroke="#3e639b" stroke-width="1.1"/></svg>
<svg style="left:671.8px;top:61.5px" width="20.0" height="20.0" viewBox="0 0 20 20"><rect x="3" y="10" width="14" height="5.5" fill="#dbe7f6" stroke="#3e639b" stroke-width="1.3"/><path d="M5.8 10 v2.5" stroke="#3e639b" stroke-width="1.1"/><path d="M8.6 10 v2.5" stroke="#3e639b" stroke-width="1.1"/><path d="M11.4 10 v2.5" stroke="#3e639b" stroke-width="1.1"/><path d="M14.2 10 v2.5" stroke="#3e639b" stroke-width="1.1"/><path d="M10 9 V4 M10 4 L5.5 7.5 M10 4 L14.5 7.5" fill="none" stroke="#666" stroke-width="1"/><path d="M8.5 4.2 L10 2 L11.5 4.2 Z M4.5 6 L4.5 8.5 L7 8 Z M15.5 6 L15.5 8.5 L13 8 Z" fill="#666"/></svg>
<svg style="left:647.8px;top:89.5px" width="20.0" height="20.0" viewBox="0 0 20 20"><rect x="3" y="9.5" width="14" height="6.5" fill="#dbe7f6" stroke="#3e639b" stroke-width="1.3"/><path d="M5.8 9.5 v2.9" stroke="#3e639b" stroke-width="1.1"/><path d="M8.6 9.5 v2.9" stroke="#3e639b" stroke-width="1.1"/><path d="M11.4 9.5 v2.9" stroke="#3e639b" stroke-width="1.1"/><path d="M14.2 9.5 v2.9" stroke="#3e639b" stroke-width="1.1"/><path d="M4 5.5 H16" stroke="#666" stroke-width="1.1"/><path d="M3 5.5 L6 3.5 V7.5 Z M17 5.5 L14 3.5 V7.5 Z" fill="#666"/></svg>
<svg style="left:671.8px;top:89.5px" width="20.0" height="20.0" viewBox="0 0 20 20"><rect x="3" y="10.5" width="14" height="6" fill="#dbe7f6" stroke="#3e639b" stroke-width="1.3"/><path d="M5.8 10.5 v2.7" stroke="#3e639b" stroke-width="1.1"/><path d="M8.6 10.5 v2.7" stroke="#3e639b" stroke-width="1.1"/><path d="M11.4 10.5 v2.7" stroke="#3e639b" stroke-width="1.1"/><path d="M14.2 10.5 v2.7" stroke="#3e639b" stroke-width="1.1"/><path d="M4 8.5 V5.5 L7 3 H15.5 V8.5 Z" fill="#a9b8cc" stroke="#3e639b" stroke-width="1.1"/><path d="M19 14 V18 H15 Z" fill="#111"/></svg>
<svg style="left:707.8px;top:61.5px" width="20.0" height="20.0" viewBox="0 0 20 20"><text x="9" y="13" font-family="Liberation Sans,sans-serif" font-weight="bold" font-size="9" text-anchor="middle" fill="#3e639b">Abc</text><path d="M19 14 V18 H15 Z" fill="#111"/></svg>
<svg style="left:731.8px;top:61.5px" width="20.0" height="20.0" viewBox="0 0 20 20"><circle cx="6" cy="9.5" r="2.7" fill="none" stroke="#3e639b" stroke-width="1"/><path d="M6 2.5 V17.5 M2 9.5 H17" stroke="#3e639b" stroke-width="1"/><text x="12.8" y="7" font-family="Liberation Sans,sans-serif" font-weight="bold" font-size="5.6" text-anchor="middle" fill="#3e639b">ABC</text><rect x="9.5" y="12.5" width="6" height="3" rx="1" fill="#c9202e"/></svg>
<svg style="left:755.8px;top:61.5px" width="20.0" height="20.0" viewBox="0 0 20 20"><rect x="4" y="2.5" width="11.5" height="14.5" fill="#e9e9e9" stroke="#6d6d6d" stroke-width="1.1"/><path d="M6 5.5 H13.5 M6 8 H13.5 M6 10.5 H13.5 M6 13 H10" stroke="#6d6d6d" stroke-width="1.1"/><path d="M11 14.5 H14" stroke="#6d6d6d" stroke-width="1.3"/><path d="M19 14 V18 H15 Z" fill="#111"/></svg>
<svg style="left:779.8px;top:61.5px" width="20.0" height="20.0" viewBox="0 0 20 20"><path d="M2.5 16.5 H17" stroke="#3e639b" stroke-width="1.5"/><rect x="3.5" y="10" width="3" height="4.5" fill="#fff" stroke="#3e639b" stroke-width="1.1"/><rect x="8.5" y="5" width="3" height="9.5" fill="#b9d0ec" stroke="#3e639b" stroke-width="1.1"/><rect x="13" y="2.5" width="3" height="12" fill="#b9d0ec" stroke="#3e639b" stroke-width="1.1"/><rect x="11.5" y="10.5" width="5" height="4.5" fill="#c9202e"/><path d="M19 14 V18 H15 Z" fill="#111"/></svg>
<svg style="left:707.8px;top:89.5px" width="20.0" height="20.0" viewBox="0 0 20 20"><text x="10" y="12" font-family="Liberation Sans,sans-serif" font-weight="bold" font-size="9.5" text-anchor="middle" fill="#3e639b">123</text><path d="M2.5 15 H16.5" stroke="#3e639b" stroke-width="1.6"/><path d="M19 14 V18 H15 Z" fill="#111"/></svg>
<svg style="left:755.8px;top:89.5px" width="20.0" height="20.0" viewBox="0 0 20 20"><path d="M3.5 7.5 L7.5 3.5 H16 L12 7.5 Z" fill="#b9d0ec" stroke="#3e639b" stroke-width="1"/><path d="M3.5 16.5 L7.5 12.5 H10" fill="#b9d0ec" stroke="#3e639b" stroke-width="1"/><path d="M3.5 7.5 V16.5" stroke="#c9202e" stroke-width="1" stroke-dasharray="1.2 1"/><rect x="10" y="9" width="7" height="8" fill="#e9e9e9" stroke="#6d6d6d" stroke-width="1"/><path d="M12 11.5 H15.5 M12 14 H15.5" stroke="#6d6d6d" stroke-width="1"/></svg>
<svg style="left:779.8px;top:89.5px" width="20.0" height="20.0" viewBox="0 0 20 20"><path d="M3.5 8 L8.5 3 H13 L8.5 8 Z" fill="#b9d0ec" stroke="#3e639b" stroke-width="1"/><path d="M3.5 8 H8.5 V17 H3.5 Z" fill="#9db3d0" stroke="#3e639b" stroke-width="1"/><path d="M8.5 8 L13 3.5 V12 L8.5 17" fill="#c5d5ea" stroke="#3e639b" stroke-width="1"/><path d="M11 9 C12 5,15 4,16.5 3.5 M11 9 L14 8" fill="none" stroke="#c9202e" stroke-width="1.2"/><path d="M6 10 L15.5 16.5" stroke="#3e639b" stroke-width="1.8"/><path d="M19 14 V18 H15 Z" fill="#111"/></svg>
<svg style="left:815.8px;top:61.5px" width="20.0" height="20.0" viewBox="0 0 20 20"><path d="M4 6 L8 4.5 L16.5 10 L12 17 L4.5 11.5 Z" fill="#b9d0ec" stroke="#3e639b" stroke-width="1.2" stroke-linejoin="round"/><circle cx="6.5" cy="7.5" r="1.3" fill="#fff" stroke="#3e639b" stroke-width=".9"/><path d="M6 7 C3 2,8 1,8.5 4.5 C9 1.5,13 2,11 6" fill="none" stroke="#3e639b" stroke-width="1"/><circle cx="14.5" cy="4.5" r="2" fill="#fff" stroke="#3e639b" stroke-width="1.1"/></svg>
<svg style="left:839.8px;top:61.5px" width="20.0" height="20.0" viewBox="0 0 20 20"><path d="M4 6 L8 4.5 L16.5 10 L12 17 L4.5 11.5 Z" fill="#b9d0ec" stroke="#3e639b" stroke-width="1.2" stroke-linejoin="round"/><circle cx="6.5" cy="7.5" r="1.3" fill="#fff" stroke="#3e639b" stroke-width=".9"/><path d="M6 7 C3 2,8 1,8.5 4.5 C9 1.5,13 2,11 6" fill="none" stroke="#3e639b" stroke-width="1"/><path d="M12.9 8.4 L17.5 4.1 L15.5 1.9 L10.8 6.2 Z" fill="#c9202e" stroke="#9a1622" stroke-width=".5"/><path d="M9.5 9.5 L12.9 8.4 L10.8 6.2 Z" fill="#e9c9b0" stroke="#7a5540" stroke-width=".4"/></svg>
<svg style="left:815.8px;top:89.5px" width="20.0" height="20.0" viewBox="0 0 20 20"><path d="M4 6 L8 4.5 L16.5 10 L12 17 L4.5 11.5 Z" fill="#b9d0ec" stroke="#3e639b" stroke-width="1.2" stroke-linejoin="round"/><circle cx="6.5" cy="7.5" r="1.3" fill="#fff" stroke="#3e639b" stroke-width=".9"/><path d="M6 7 C3 2,8 1,8.5 4.5 C9 1.5,13 2,11 6" fill="none" stroke="#3e639b" stroke-width="1"/><path d="M10 8 L14 4 L16.5 6.5 L13 9.5" fill="#c8ccd2" stroke="#5c6670" stroke-width=".9"/><path d="M14.5 3 L17 5.5" stroke="#5c6670" stroke-width="1.5"/></svg>
<svg style="left:839.8px;top:89.5px" width="20.0" height="20.0" viewBox="0 0 20 20"><path d="M4 6 L8 4.5 L16.5 10 L12 17 L4.5 11.5 Z" fill="#b9d0ec" stroke="#3e639b" stroke-width="1.2" stroke-linejoin="round"/><circle cx="6.5" cy="7.5" r="1.3" fill="#fff" stroke="#3e639b" stroke-width=".9"/><path d="M6 7 C3 2,8 1,8.5 4.5 C9 1.5,13 2,11 6" fill="none" stroke="#3e639b" stroke-width="1"/><path d="M11 11.5 L16.5 17 M16.5 11.5 L11 17" stroke="#c9202e" stroke-width="2"/></svg>
<svg style="left:875.8px;top:61.5px" width="20.0" height="20.0" viewBox="0 0 20 20"><path d="M3 3 H16 L10.8 9.5 V16 L8.2 13.4 V9.5 Z" fill="#b9d0ec" stroke="#3e639b" stroke-width="1.2" stroke-linejoin="round"/></svg>
<svg style="left:899.8px;top:61.5px" width="20.0" height="20.0" viewBox="0 0 20 20"><path d="M3 17 L4 13.5 L11 6.5 L13.5 9 L6.5 16 Z" fill="#e6e6e6" stroke="#666" stroke-width="1"/><path d="M10 5.5 L14.5 10" stroke="#3e639b" stroke-width="1.6"/><path d="M11.5 6.5 L14.5 3 C16 1.8,18 3.8,17 5.3 L13.5 8.5 Z" fill="#b9d0ec" stroke="#3e639b" stroke-width="1"/><path d="M19 14 V18 H15 Z" fill="#111"/></svg>
<svg style="left:923.8px;top:61.5px" width="20.0" height="20.0" viewBox="0 0 20 20"><path d="M2.5 3 H14.5 L9.7 9.0 V15 L7.3 12.6 V9.0 Z" fill="#b9d0ec" stroke="#3e639b" stroke-width="1.2" stroke-linejoin="round"/><path d="M10.5 16.5 V13 L13.5 10.5 L16.5 13 V16.5 Z" fill="#3e639b"/><path d="M19 14 V18 H15 Z" fill="#111"/></svg>
<svg style="left:947.8px;top:61.5px" width="20.0" height="20.0" viewBox="0 0 20 20"><path d="M4 2.5 H16 L11.2 8.0 V13.5 L8.8 11.3 V8.0 Z" fill="#b9d0ec" stroke="#3e639b" stroke-width="1.2" stroke-linejoin="round"/><path d="M3 11 V16 H17 V11" fill="none" stroke="#3e639b" stroke-width="1.6"/><path d="M19 14 V18 H15 Z" fill="#111"/></svg>
<svg style="left:875.8px;top:89.5px" width="20.0" height="20.0" viewBox="0 0 20 20"><path d="M2.5 3 H14.5 L9.7 9.0 V15 L7.3 12.6 V9.0 Z" fill="#b9d0ec" stroke="#3e639b" stroke-width="1.2" stroke-linejoin="round"/><path d="M10 15 H17 L13.5 18.5 Z" fill="#3e639b"/></svg>
<svg style="left:899.8px;top:89.5px" width="20.0" height="20.0" viewBox="0 0 20 20"><path d="M4 2.5 H16 L11.2 7.0 V11.5 L8.8 9.7 V7.0 Z" fill="#b9d0ec" stroke="#3e639b" stroke-width="1.2" stroke-linejoin="round"/><path d="M3 12 H17 M3 14.5 H17 M3 17 H17" stroke="#3e639b" stroke-width="1.4"/><path d="M19 14 V18 H15 Z" fill="#111"/></svg>
<svg style="left:923.8px;top:89.5px" width="20.0" height="20.0" viewBox="0 0 20 20"><path d="M3 3 H14 L9.6 8.0 V13 L7.4 11.0 V8.0 Z" fill="#b9d0ec" stroke="#3e639b" stroke-width="1.2" stroke-linejoin="round"/><rect x="8" y="9" width="7.5" height="7" fill="none" stroke="#3e639b" stroke-width="1" stroke-dasharray="1.6 1.2"/><rect x="2.5" y="15" width="2" height="2" fill="#2b3f5e"/><rect x="15" y="7.5" width="2" height="2" fill="#2b3f5e"/><path d="M19 14 V18 H15 Z" fill="#111"/></svg>
<svg style="left:947.8px;top:89.5px" width="20.0" height="20.0" viewBox="0 0 20 20"><rect x="8" y="7" width="9" height="9.5" fill="#b9d0ec" stroke="#3e639b" stroke-width="1.1"/><circle cx="9.5" cy="7.5" r="4" fill="#eef3fa" stroke="#3e639b" stroke-width="1.3"/><path d="M6.5 10.5 L2.5 15.5" stroke="#3e639b" stroke-width="2.2" stroke-linecap="round"/></svg>
<svg style="left:983.8px;top:61.5px" width="20.0" height="20.0" viewBox="0 0 20 20"><path d="M3 3 V16.5 H17 V13.5 H6 V3 Z" fill="#dbe7f6" stroke="#3e639b" stroke-width="1.2"/><path d="M8 15 v1.5 M10.5 15 v1.5 M13 15 v1.5 M3 6 h1.5 M3 9 h1.5" stroke="#3e639b" stroke-width=".9"/><path d="M9 8 C9 4.5,13 3.5,15 6 M16 10 C14.5 13,10.5 12.5,9.5 10.5" fill="none" stroke="#666" stroke-width="1.4"/><path d="M13.5 6.5 L16.5 7.5 L16 4 Z M11 10 L8.5 9.5 L9.5 12.5 Z" fill="#666"/><path d="M19 14 V18 H15 Z" fill="#111"/></svg>
<svg style="left:1007.8px;top:61.5px" width="20.0" height="20.0" viewBox="0 0 20 20"><path d="M2.5 2.5 H17.5 V17.5 Z" fill="#c9c2ee"/><path d="M2.5 2.5 V17.5 H17.5 Z" fill="#a9e9a3"/><rect x="2.5" y="2.5" width="15" height="15" fill="none" stroke="#333" stroke-width="1.1" stroke-dasharray="2.4 1.6"/><path d="M11 5 L15 9 M12 9.3 H15.3 V6 M9 15 L5 11 M8 10.7 H4.7 V14" fill="none" stroke="#111" stroke-width="1.3"/><path d="M19 14 V18 H15 Z" fill="#111"/></svg>
<svg style="left:1031.8px;top:61.5px" width="20.0" height="20.0" viewBox="0 0 20 20"><path d="M6 3 H16.5 V17 H4 V8" fill="#dbe7f6" stroke="#3e639b" stroke-width="1.1"/><path d="M4 11 C5 7,10 6,12 9.5" fill="none" stroke="#3e639b" stroke-width="1.7"/><path d="M2.5 7.5 L3.5 12.5 L8 10 Z" fill="#3e639b"/></svg>
<svg style="left:983.8px;top:89.5px" width="20.0" height="20.0" viewBox="0 0 20 20"><path d="M10 11 V4" stroke="#3e639b" stroke-width="2.2"/><path d="M6.5 6 L10 1.5 L13.5 6 Z" fill="#3e639b"/><path d="M10 11 L5 15.5" stroke="#1e9a46" stroke-width="2.2"/><path d="M2.5 18 L3.2 12.5 L8 17 Z" fill="#1e9a46"/><path d="M10 11 L15 15.5" stroke="#e0202e" stroke-width="2.2"/><path d="M17.5 18 L16.8 12.5 L12 17 Z" fill="#e0202e"/><path d="M19 14 V18 H15 Z" fill="#111"/></svg>
<svg style="left:1007.8px;top:89.5px" width="20.0" height="20.0" viewBox="0 0 20 20"><path d="M3 3 H16 M5 5.5 H16" stroke="#666" stroke-width="1"/><path d="M5.5 6.5 L14.5 10 L11 11.5 L14 16 L12 17 L9.5 12.5 L7 15 Z" fill="#b9d0ec" stroke="#3e639b" stroke-width="1.1" stroke-linejoin="round"/><path d="M19 14 V18 H15 Z" fill="#111"/></svg>
<svg style="left:1031.8px;top:89.5px" width="20.0" height="20.0" viewBox="0 0 20 20"><path d="M3.5 3 H16.5 V6 H9 L13 10 L9 14 H16.5 V17 H3.5 V14.5 L8.5 10 L3.5 5.5 Z" fill="#bdbdbd" stroke="#a9a9a9" stroke-width=".6"/></svg>
<div class="t" style="left:8px;top:131px;font-size:11.6px">PatchWork</div>
<svg style="left:490px;top:128px" width="36" height="20" viewBox="490 128 36 20"><path d="M495 132.500 H499.500 V138 H495 Z M493.500 138.500 H501 M497.300 138.500 V143" fill="none" stroke="#333" stroke-width="1.1"/><path d="M498.500 132.500 V138" stroke="#333" stroke-width="1.600"/><rect x="509.500" y="130.500" width="14" height="13" rx="2" fill="#c9dbf0" stroke="#7fa0cf" stroke-width="1"/><path d="M513 133.500 L520 140.500 M520 133.500 L513 140.500" stroke="#555" stroke-width="1.2"/></svg>
<div class="a" style="left:4px;top:148px;width:522px;height:880px;background:#fff"></div>
<div class="a" style="left:526px;top:128px;width:4px;height:900px;background:#fff"></div>
<div class="a" style="left:179px;top:154px;width:167px;height:19px;background:#dce5f0;border:1px solid #a9b7c9;border-radius:3px 3px 0 0"></div>
<div class="a" style="left:350px;top:154px;width:167px;height:19px;background:#dce5f0;border:1px solid #a9b7c9;border-radius:3px 3px 0 0"></div>
<div class="a" style="left:4px;top:172px;width:522px;height:856px;background:#fff;border:1px solid #a9b7c9;border-bottom:0"></div>
<div class="a" style="left:6px;top:152px;width:171px;height:22px;background:#fff;border:1px solid #a9b7c9;border-bottom:0;border-radius:3px 3px 0 0"></div>
<div class="t" style="left:6px;top:155px;width:171px;text-align:center">PatchWork</div>
<div class="t" style="left:179px;top:156px;width:167px;text-align:center">Objekte</div>
<div class="t" style="left:350px;top:156px;width:167px;text-align:center">Layer</div>
<div class="a" style="left:6px;top:989px;width:517px;height:38px;background:#dbe5f0"></div>
<div class="a" style="left:6px;top:182px;width:493px;height:807px;background:#fff;border:1px solid #a9b7c9"></div>
<div class="a" style="left:498px;top:188px;width:20px;height:91px;background:#dce5f0;border:1px solid #a9b7c9;border-left:0;border-radius:0 3px 3px 0"></div>
<div class="a" style="left:498px;top:285px;width:22px;height:91px;background:#fff;border:1px solid #a9b7c9;border-left:0;border-radius:0 3px 3px 0"></div>
<div class="t" style="left:459px;top:227px;width:100px;text-align:center;transform:rotate(-90deg)">Geometrie</div>
<div class="t" style="left:459px;top:323px;width:100px;text-align:center;transform:rotate(-90deg)">Darstellung</div>
<svg style="left:478px;top:186px" width="18" height="800" viewBox="478 186 18 800"><path d="M483 196.500 H489.500 L486.200 192.500 Z" fill="#3e5f92"/><path d="M483 972 H489.500 L486.200 976 Z" fill="#3e5f92"/><rect x="481.500" y="203.500" width="9" height="603" rx="2" fill="#fff" stroke="#8a8f98" stroke-width="1"/><path d="M484 502 h4 M484 504.500 h4 M484 507 h4 M484 509.500 h4" stroke="#666" stroke-width="1"/></svg>
<svg style="left:18px;top:200px" width="14" height="12" viewBox="18 200 14 12"><path d="M20 203.500 H29 L24.500 209 Z" fill="#444"/></svg>
<div class="hd" style="left:33px;top:200px;font-size:12.3px">Stile</div>
<div class="hl" style="left:64px;top:206px;width:405px;background:#b9bec6"></div>
<div class="lbl" style="top:227px">Stile</div>
<div class="btn" style="left:357px;top:224px;width:54px;height:21px"></div>
<div class="btn" style="left:416px;top:224px;width:55px;height:21px"></div>
<svg style="left:357px;top:224px" width="114" height="21" viewBox="357 224 114 21"><path d="M382.500 228 H385.500 V233 H390.500 V236 H385.500 V241 H382.500 V236 H377.500 V233 H382.500 Z" fill="#dfeaf8" stroke="#3e639b" stroke-width="1.1"/><path d="M436.500 228 H440.300 L443.800 232.300 L447.300 228 H451 L445.700 234.500 L451 241 H447.300 L443.800 236.700 L440.300 241 H436.500 L441.900 234.500 Z" fill="#e8394a" stroke="#b01825" stroke-width=".7"/></svg>
<div class="a" style="left:33px;top:249px;width:439px;height:146px;background:#fff;border:1px solid #9db7d9"></div>
<div class="a" style="left:34px;top:250px;width:437px;height:30px;background:#dde6f1;border:1px solid #7aa3dc;border-top:0"></div>
<div class="a" style="left:34px;top:326px;width:437px;height:23px;background:#b9cfea"></div>
<div class="a" style="left:53px;top:250px;width:1px;height:30px;background:#8fb0dc"></div>
<div class="a" style="left:53px;top:280px;width:1px;height:114px;background:#e8ebef"></div>
<div class="a" style="left:95px;top:250px;width:1px;height:30px;background:#8fb0dc"></div>
<div class="a" style="left:95px;top:280px;width:1px;height:114px;background:#e8ebef"></div>
<div class="a" style="left:137px;top:250px;width:1px;height:30px;background:#8fb0dc"></div>
<div class="a" style="left:137px;top:280px;width:1px;height:114px;background:#e8ebef"></div>
<div class="a" style="left:197px;top:250px;width:1px;height:30px;background:#8fb0dc"></div>
<div class="a" style="left:197px;top:280px;width:1px;height:114px;background:#e8ebef"></div>
<div class="a" style="left:298px;top:250px;width:1px;height:30px;background:#8fb0dc"></div>
<div class="a" style="left:298px;top:280px;width:1px;height:114px;background:#e8ebef"></div>
<div class="hd" style="left:38px;top:258px">ID</div>
<div class="hd" style="left:58px;top:258px">Name</div>
<div class="hd" style="left:100px;top:258px">Fläche</div>
<div class="hd" style="left:141px;top:258px">2D-Linien</div>
<div class="hd" style="left:201px;top:258px">Anzahl Schichten</div>
<div class="tr" style="left:37px;top:285px">1</div>
<div class="tr" style="left:56px;top:285px">Beton</div>
<div class="tr" style="left:200px;top:285px">1</div>
<div class="tr" style="left:37px;top:308px">2</div>
<div class="tr" style="left:56px;top:308px">Rasen</div>
<div class="tr" style="left:200px;top:308px">1</div>
<div class="tr" style="left:37px;top:331px">3</div>
<div class="tr" style="left:56px;top:331px">Strasse</div>
<div class="tr" style="left:200px;top:331px">1</div>
<div class="tr" style="left:37px;top:354px">4</div>
<div class="tr" style="left:56px;top:354px">Weg</div>
<div class="tr" style="left:200px;top:354px">1</div>
<div class="tr" style="left:37px;top:377px">5</div>
<div class="tr" style="left:56px;top:377px">Sand</div>
<div class="tr" style="left:200px;top:377px">1</div>
<svg style="left:0;top:0" width="480" height="400" viewBox="0 0 480 400"><rect x="98" y="283" width="35" height="17" fill="#888" filter="url(#fbet)"/><path d="M139 291.5 H193" stroke="#111" stroke-width="1"/><rect x="98" y="306" width="35" height="17" fill="#888" filter="url(#fgrass)"/><path d="M139 314.5 H193" stroke="#111" stroke-width="1"/><rect x="98" y="329" width="35" height="17" fill="#888" filter="url(#fstr)"/><path d="M139 337.5 H193" stroke="#111" stroke-width="1"/><rect x="98" y="352" width="35" height="17" fill="#888" filter="url(#fwegs)"/><path d="M139 360.5 H193" stroke="#111" stroke-width="1"/><rect x="98" y="375" width="35" height="17" fill="#888" filter="url(#fsand)"/><path d="M139 383.5 H193" stroke="#111" stroke-width="1"/></svg>
<div class="lbl" style="top:404px">Name</div>
<div class="inp" style="left:356px;top:401px;width:90px;text-align:left;padding-left:4px">Strasse</div>
<div class="btn" style="left:449px;top:400px;width:22px;height:22px;background:#d5e2f3"></div>
<svg style="left:449px;top:400px" width="22" height="22" viewBox="449 400 22 22"><path d="M454 406 L459 411 L454 416 M460 406 L465 411 L460 416" fill="none" stroke="#2f4f86" stroke-width="1.800"/></svg>
<div class="hd" style="left:33px;top:427px">2D-Darstellung</div><div class="hl" style="left:127px;top:434px;width:342px"></div>
<div class="lbl" style="top:449px">Layer</div>
<div class="cmb" style="left:355px;top:446px;width:116px;padding-left:8px;letter-spacing:-0.3px">STANDARD<i></i></div>
<div class="lbl" style="top:475px">Farbe</div>
<div class="cb" style="left:355px;top:476px"></div>
<div class="cmb" style="left:374px;top:472px;width:97px"><span style="position:absolute;left:20px">1</span><i></i></div>
<div class="lbl" style="top:501px">Stift</div>
<div class="cb" style="left:355px;top:502px"></div>
<div class="cmb" style="left:374px;top:498px;width:97px"><span style="position:absolute;left:6px">0.13</span><i></i></div>
<div class="lbl" style="top:527px">Strich</div>
<div class="cb" style="left:355px;top:528px"></div>
<div class="cmb" style="left:374px;top:524px;width:97px"><span style="position:absolute;left:20px">1</span><i></i></div>
<svg style="left:374px;top:472px" width="97" height="72" viewBox="374 472 97 72"><rect x="407" y="477" width="40" height="10" fill="#000"/><path d="M407 508.500 H447" stroke="#111" stroke-width="1"/><path d="M407 534.500 H447" stroke="#111" stroke-width="1"/></svg>
<div class="hd" style="left:33px;top:551px">Flächendarstellung</div><div class="hl" style="left:148px;top:558px;width:321px"></div>
<div class="lbl" style="top:573px">Flächenelement</div>
<div class="cmb" style="left:355px;top:570px;width:116px;padding-left:32px">Pixelfläche<i></i></div>
<svg style="left:362px;top:573px" width="18" height="14" viewBox="362 573 18 14"><rect x="364.500" y="575.500" width="14" height="9" fill="#e4edf8" stroke="#3e639b" stroke-width="1.1"/><path d="M365 581 L368.500 578 L371.500 580.500 L374 577.500 L378 581" fill="none" stroke="#3e639b" stroke-width="1"/></svg>
<div class="lbl" style="top:599px">Reihenfolge</div>
<div class="inp" style="left:355px;top:596px;width:116px">-3</div>
<div class="hd" style="left:34px;top:622px">Pixelfläche</div><div class="hl" style="left:104px;top:629px;width:365px"></div>
<div class="lbl" style="top:689px">Pixelbild</div>
<svg style="left:354px;top:638px" width="116" height="116" viewBox="0 0 116 116"><rect x=".5" y=".5" width="115" height="115" fill="#888" filter="url(#fasph)"/><rect x=".5" y=".5" width="115" height="115" fill="none" stroke="#111" stroke-width="1"/></svg>
<div class="lbl" style="top:760px">Wiederholung</div>
<div class="cb" style="left:355px;top:761px"></div>
<svg style="left:355px;top:761px" width="13" height="13" viewBox="0 0 12 12"><path d="M2.500 6 L5 8.700 L9.500 2.800" fill="none" stroke="#2f4f86" stroke-width="1.500"/></svg>
<div class="lbl" style="top:786px">Transparenz</div><div class="inp" style="left:355px;top:783px;width:116px">0</div>
<div class="lbl" style="top:812px">Pixel ausblenden</div>
<div class="cb" style="left:355px;top:813px"></div>
<div class="lbl" style="top:838px;color:#a8a8a8">Farbe</div><div class="a" style="left:355px;top:835px;width:116px;height:21px;background:#000;border:1px solid #a9b4c2"></div>
<div class="lbl" style="top:864px;color:#a8a8a8">Toleranz</div><div class="inp" style="left:355px;top:861px;width:116px;background:#eee;color:#aaa;border-color:#c4c9d0">0</div>
<div class="lbl" style="top:890px">Größe in Metern</div>
<div class="cb" style="left:355px;top:891px"></div>
<svg style="left:355px;top:891px" width="13" height="13" viewBox="0 0 12 12"><path d="M2.500 6 L5 8.700 L9.500 2.800" fill="none" stroke="#2f4f86" stroke-width="1.500"/></svg>
<div class="lbl" style="top:916px">X/Y konstant</div>
<div class="cb" style="left:355px;top:917px"></div>
<svg style="left:355px;top:917px" width="13" height="13" viewBox="0 0 12 12"><path d="M2.500 6 L5 8.700 L9.500 2.800" fill="none" stroke="#2f4f86" stroke-width="1.500"/></svg>
<div class="lbl" style="top:942px">Breite</div><div class="inp" style="left:355px;top:939px;width:116px">5.0000</div>
<div class="lbl" style="top:968px">Höhe</div><div class="inp" style="left:355px;top:965px;width:116px;height:23px;border-bottom:0">5.0000</div>
<div class="btn" style="left:349px;top:997px;width:74px;height:23px;line-height:21px;background:#e6edf7">Abbrechen</div>
<div class="btn" style="left:431px;top:997px;width:75px;height:23px;line-height:21px;background:#e6edf7">Schließen</div>
<svg style="left:0;top:0" width="0" height="0"><defs>
<filter id="fconc" x="0" y="0" width="100%" height="100%" color-interpolation-filters="sRGB"><feTurbulence type="fractalNoise" baseFrequency="0.05 0.085" numOctaves="3" seed="4" result="n"/><feColorMatrix in="n" type="matrix" values="0.11 0 0 0 0.625  0.11 0 0 0 0.628  0.11 0 0 0 0.636  0 0 0 0 1"/><feComposite in2="SourceGraphic" operator="in"/></filter>
<filter id="fconc3" x="0" y="0" width="100%" height="100%" color-interpolation-filters="sRGB"><feTurbulence type="fractalNoise" baseFrequency="0.1 0.17" numOctaves="3" seed="9" result="n"/><feColorMatrix in="n" type="matrix" values="0.1 0 0 0 0.78  0.1 0 0 0 0.78  0.1 0 0 0 0.79  0 0 0 0 1"/><feComposite in2="SourceGraphic" operator="in"/></filter>
<filter id="fgrav" x="0" y="0" width="100%" height="100%" color-interpolation-filters="sRGB"><feTurbulence type="fractalNoise" baseFrequency="0.21" numOctaves="2" seed="7" result="n"/><feColorMatrix in="n" type="matrix" values="1.1 0.3 0 0 -0.225  1.1 0.06 0 0 -0.125  1.1 -0.28 0 0 0.03  0 0 0 0 1"/><feComposite in2="SourceGraphic" operator="in"/></filter>
<filter id="fasph" x="0" y="0" width="100%" height="100%" color-interpolation-filters="sRGB"><feTurbulence type="fractalNoise" baseFrequency="0.62" numOctaves="2" seed="3" result="a"/><feTurbulence type="fractalNoise" baseFrequency="0.035" numOctaves="2" seed="14" result="b"/><feComposite in="a" in2="b" operator="arithmetic" k1="0" k2="0.62" k3="0.3" k4="0.1"/><feColorMatrix type="matrix" values="1 0 0 0 0  1 0 0 0 0.005  1 0 0 0 0.015  0 0 0 0 1"/><feComposite in2="SourceGraphic" operator="in"/></filter>
<filter id="fgrass" x="0" y="0" width="100%" height="100%" color-interpolation-filters="sRGB"><feTurbulence type="fractalNoise" baseFrequency="0.5" numOctaves="2" seed="5" result="n"/><feColorMatrix in="n" type="matrix" values="0.9 0 0 0 -0.15  1.2 0 0 0 -0.05  0.6 0 0 0 -0.18  0 0 0 0 1"/><feComposite in2="SourceGraphic" operator="in"/></filter>
<filter id="fsand" x="0" y="0" width="100%" height="100%" color-interpolation-filters="sRGB"><feTurbulence type="fractalNoise" baseFrequency="0.6" numOctaves="2" seed="6" result="n"/><feColorMatrix in="n" type="matrix" values="0.5 0 0 0 0.37  0.5 0 0 0 0.29  0.5 0 0 0 0.16  0 0 0 0 1"/><feComposite in2="SourceGraphic" operator="in"/></filter>
<filter id="fbet" x="0" y="0" width="100%" height="100%" color-interpolation-filters="sRGB"><feTurbulence type="fractalNoise" baseFrequency="0.4" numOctaves="2" seed="2" result="n"/><feColorMatrix in="n" type="matrix" values="0.4 0 0 0 0.5  0.4 0 0 0 0.5  0.4 0 0 0 0.5  0 0 0 0 1"/><feComposite in2="SourceGraphic" operator="in"/></filter>
<filter id="fstr" x="0" y="0" width="100%" height="100%" color-interpolation-filters="sRGB"><feTurbulence type="fractalNoise" baseFrequency="0.7" numOctaves="2" seed="8" result="n"/><feColorMatrix in="n" type="matrix" values="0.8 0 0 0 0.25  0.8 0 0 0 0.25  0.8 0 0 0 0.25  0 0 0 0 1"/><feComposite in2="SourceGraphic" operator="in"/></filter>
<filter id="fwegs" x="0" y="0" width="100%" height="100%" color-interpolation-filters="sRGB"><feTurbulence type="fractalNoise" baseFrequency="0.75" numOctaves="2" seed="12"/><feColorMatrix type="matrix" values="1.3 0 0 0 -0.24  1.3 0 0 0 -0.24  1.3 0 0 0 -0.23  0 0 0 0 1"/><feComposite in2="SourceGraphic" operator="in"/></filter>
<filter id="fh1" x="0" y="0" width="100%" height="100%"><feTurbulence type="fractalNoise" baseFrequency="0.22 0.6" numOctaves="2" seed="11"/><feColorMatrix type="matrix" values="0 0 0 0 0  0 0 0 0 0  0 0 0 0 0  10 0 0 0 -4.9"/><feComposite in="SourceGraphic" operator="in"/></filter>
<filter id="fh2" x="0" y="0" width="100%" height="100%"><feTurbulence type="fractalNoise" baseFrequency="0.2 0.6" numOctaves="2" seed="21"/><feColorMatrix type="matrix" values="0 0 0 0 0  0 0 0 0 0  0 0 0 0 0  10 0 0 0 -4.4"/><feComposite in="SourceGraphic" operator="in"/></filter>
<filter id="fh3" x="0" y="0" width="100%" height="100%"><feTurbulence type="fractalNoise" baseFrequency="0.12 0.5" numOctaves="2" seed="31"/><feColorMatrix type="matrix" values="0 0 0 0 0  0 0 0 0 0  0 0 0 0 0  10 0 0 0 -5.7"/><feComposite in="SourceGraphic" operator="in"/></filter>
</defs></svg>
<div class="a" style="left:530px;top:127px;width:1363px;height:903px;background:#fff;border:2px solid #a6a6a6;border-left-width:2px"></div>
<div class="a" style="left:1210px;top:129px;width:3px;height:899px;background:#ececec"></div>
<div class="a" style="left:1213px;top:576px;width:678px;height:3px;background:#ececec"></div>
<div class="a" style="left:1893px;top:127px;width:23px;height:903px;background:#fff;border-right:2px solid #a6a6a6"></div>
<svg style="left:1893px;top:127px" width="23" height="903" viewBox="1893 127 23 903"><path d="M1914 128 H1897 Q1894.500 128,1894.500 131 V428 H1914 M1914 429 H1899 Q1896.500 429,1896.500 432 V724 H1914 M1914 725 H1899 Q1896.500 725,1896.500 728 V1020 H1914" fill="none" stroke="#b4b4b4" stroke-width="1.200"/></svg>
<div class="t" style="left:1855px;top:270px;width:100px;text-align:center;transform:rotate(-90deg);font-size:11px">Assistenten</div>
<div class="t" style="left:1855px;top:568px;width:100px;text-align:center;transform:rotate(-90deg);font-size:11px">Bibliothek</div>
<div class="t" style="left:1855px;top:866px;width:100px;text-align:center;transform:rotate(-90deg);font-size:11px">Ebenen</div>
<div class="vt" style="left:828px;top:129px;width:85px;background:#b9d0ea;color:#1a1f3a">Grundriss:1</div>
<div class="vt" style="left:1483px;top:129px;width:138px;background:#dde7f3;color:#8a929c">Zentralperspektive:3</div>
<div class="vt" style="left:1461px;top:580px;width:182px;background:#dde7f3;color:#8a929c">Ansicht von vorne, Süden:2</div>
<svg style="left:1174px;top:134px" width="34" height="14" viewBox="1174 134 34 14"><rect x="1178" y="137" width="10.500" height="8" fill="none" stroke="#2f4f86" stroke-width="1.700"/><path d="M1193.500 136.500 L1202.500 145.500 M1202.500 136.500 L1193.500 145.500" stroke="#2f4f86" stroke-width="2.600"/></svg>
<svg class="vp" style="left:532px;top:129px" width="678" height="899" viewBox="532 129 678 899"><path d="M614.8 309.3 C631.9 311.7,684.8 317.3,717.5 323.8 C750.2 330.3,787.5 342.1,811.3 348.1 C835.0 354.1,842.5 354.6,860.0 360.0 C877.5 365.4,895.7 372.2,916.3 380.6 C936.9 389.0,966.3 402.2,983.8 410.6 C1001.3 419.1,1007.5 423.2,1021.3 431.3 C1035.0 439.4,1052.5 451.0,1066.3 459.4 C1080.0 467.8,1092.5 475.1,1103.8 481.9 C1115.1 488.7,1129.2 497.2,1134.3 500.3 L1134.3 890.3 L818.5 890.3 L818.5 636.5 L582 636.5 Z" fill="#bbb" filter="url(#fconc)"/><defs><pattern id="tile" x="818.5" y="636.5" width="42.3" height="42.3" patternUnits="userSpaceOnUse"><rect width="42.3" height="6" fill="#fff" opacity=".07"/><rect y="20" width="42.3" height="9" fill="#000" opacity=".035"/><rect x="19" y="17" width="5" height="5" fill="#000" opacity=".05"/></pattern></defs><path d="M614.8 309.3 C631.9 311.7,684.8 317.3,717.5 323.8 C750.2 330.3,787.5 342.1,811.3 348.1 C835.0 354.1,842.5 354.6,860.0 360.0 C877.5 365.4,895.7 372.2,916.3 380.6 C936.9 389.0,966.3 402.2,983.8 410.6 C1001.3 419.1,1007.5 423.2,1021.3 431.3 C1035.0 439.4,1052.5 451.0,1066.3 459.4 C1080.0 467.8,1092.5 475.1,1103.8 481.9 C1115.1 488.7,1129.2 497.2,1134.3 500.3 L1134.3 890.3 L818.5 890.3 L818.5 636.5 L582 636.5 Z" fill="url(#tile)"/><path d="M617.2 283.4 C633.9 286.1,685.1 293.3,717.5 299.4 C749.9 305.5,787.5 314.4,811.3 320.0 C835.0 325.6,842.5 327.1,860.0 332.8 C877.5 338.5,900.7 348.1,916.3 354.4 C931.9 360.6,940.0 364.5,953.8 370.3 C967.5 376.1,983.2 381.8,998.8 389.1 C1014.4 396.5,1031.9 405.8,1047.5 414.4 C1063.1 423.0,1079.4 432.6,1092.5 440.6 C1105.6 448.6,1115.0 454.6,1126.3 462.2 C1137.6 469.8,1154.9 482.2,1160.6 486.2 L1160.6 783.3 L1134.3 783.3 L1134.3 500.3 C1129.2 497.2,1115.1 488.7,1103.8 481.9 C1092.5 475.1,1080.0 467.8,1066.3 459.4 C1052.5 451.0,1035.0 439.4,1021.3 431.3 C1007.5 423.2,1001.3 419.1,983.8 410.6 C966.3 402.2,936.9 389.0,916.3 380.6 C895.7 372.2,877.5 365.4,860.0 360.0 C842.5 354.6,835.0 354.1,811.3 348.1 C787.5 342.1,750.2 330.3,717.5 323.8 C684.8 317.3,631.9 311.7,614.8 309.3 Z" fill="#666" filter="url(#fgrav)"/><path d="M614.8 309.3 C631.9 311.7,684.8 317.3,717.5 323.8 C750.2 330.3,787.5 342.1,811.3 348.1 C835.0 354.1,842.5 354.6,860.0 360.0 C877.5 365.4,895.7 372.2,916.3 380.6 C936.9 389.0,966.3 402.2,983.8 410.6 C1001.3 419.1,1007.5 423.2,1021.3 431.3 C1035.0 439.4,1052.5 451.0,1066.3 459.4 C1080.0 467.8,1092.5 475.1,1103.8 481.9 C1115.1 488.7,1129.2 497.2,1134.3 500.3 L1134.3 890.3 L818.5 890.3 L818.5 636.5 L582 636.5 Z" fill="none" stroke="#000" stroke-width="1.1"/><path d="M617.2 283.4 C633.9 286.1,685.1 293.3,717.5 299.4 C749.9 305.5,787.5 314.4,811.3 320.0 C835.0 325.6,842.5 327.1,860.0 332.8 C877.5 338.5,900.7 348.1,916.3 354.4 C931.9 360.6,940.0 364.5,953.8 370.3 C967.5 376.1,983.2 381.8,998.8 389.1 C1014.4 396.5,1031.9 405.8,1047.5 414.4 C1063.1 423.0,1079.4 432.6,1092.5 440.6 C1105.6 448.6,1115.0 454.6,1126.3 462.2 C1137.6 469.8,1154.9 482.2,1160.6 486.2 L1160.6 783.3 L1134.3 783.3 L1134.3 500.3 C1129.2 497.2,1115.1 488.7,1103.8 481.9 C1092.5 475.1,1080.0 467.8,1066.3 459.4 C1052.5 451.0,1035.0 439.4,1021.3 431.3 C1007.5 423.2,1001.3 419.1,983.8 410.6 C966.3 402.2,936.9 389.0,916.3 380.6 C895.7 372.2,877.5 365.4,860.0 360.0 C842.5 354.6,835.0 354.1,811.3 348.1 C787.5 342.1,750.2 330.3,717.5 323.8 C684.8 317.3,631.9 311.7,614.8 309.3 Z" fill="none" stroke="#000" stroke-width="1.1"/><path d="M604.6 411.5 C614.0 412.9,642.1 417.0,661.0 420.0 C679.9 423.0,696.4 424.9,718.0 429.7 C739.6 434.5,767.8 441.9,790.4 448.6 C813.0 455.3,837.6 464.1,853.4 469.7 C869.1 475.3,874.4 477.1,884.9 482.3 C895.4 487.6,905.9 493.9,916.4 501.2 C926.9 508.5,937.3 516.2,947.8 526.4 C958.3 536.6,970.9 551.3,979.3 562.6 C987.7 573.9,993.2 583.6,998.2 594.1 C1003.2 604.6,1006.5 614.1,1009.2 625.6 C1011.9 637.1,1013.6 652.7,1014.6 663.4 C1015.6 674.1,1015.4 685.6,1015.5 690.0 L1015.5 890.3" fill="none" stroke="#000" stroke-width="1.1"/><path d="M604.2 283.4 H630.2 M617.2 270.4 V296.4 M591.6 411.5 H617.6 M604.6 398.5 V424.5 M704.5 429.5 H730.5 M717.5 416.5 V442.5 M569.0 636.5 H595.0 M582.0 623.5 V649.5 M805.5 636.5 H831.5 M818.5 623.5 V649.5 M1147.6 486.2 H1173.6 M1160.6 473.2 V499.2 M1121.3 500.3 H1147.3 M1134.3 487.3 V513.3 M1002.5 759.2 H1028.5 M1015.5 746.2 V772.2 M1147.6 783.3 H1173.6 M1160.6 770.3 V796.3 M1121.3 783.3 H1147.3 M1134.3 770.3 V796.3 M805.5 890.3 H831.5 M818.5 877.3 V903.3 M1002.5 890.3 H1028.5 M1015.5 877.3 V903.3 M1121.3 890.3 H1147.3 M1134.3 877.3 V903.3 " stroke="#000" stroke-width="1" fill="none"/><g font-family="Liberation Sans,sans-serif" font-size="9.2" fill="#000"><text x="614.7" y="291.7" text-anchor="end" style="white-space:pre">H =  -2.380 m</text><text x="602.1" y="419.8" text-anchor="end" style="white-space:pre">H =  -2.380 m</text><text x="715.0" y="437.8" text-anchor="end" style="white-space:pre">H =  -2.488 m</text><text x="579.5" y="644.8" text-anchor="end" style="white-space:pre">H =  -2.380 m</text><text x="816.0" y="644.8" text-anchor="end" style="white-space:pre">H =  -2.873 m</text><text x="1158.1" y="494.5" text-anchor="end" style="white-space:pre">H =  -2.695 m</text><text x="1131.8" y="508.6" text-anchor="end" style="white-space:pre">H =  -2.695 m</text><text x="1013.0" y="767.5" text-anchor="end" style="white-space:pre">H =  -3.140 m</text><text x="1158.1" y="791.6" text-anchor="end" style="white-space:pre">H =  -3.039 m</text><text x="1131.8" y="791.6" text-anchor="end" style="white-space:pre">H =  -3.067 m</text><text x="816.0" y="898.6" text-anchor="end" style="white-space:pre">H =  -3.240 m</text><text x="1013.0" y="898.6" text-anchor="end" style="white-space:pre">H =  -3.240 m</text><text x="1131.8" y="898.6" text-anchor="end" style="white-space:pre">H =  -3.240 m</text></g><g font-family="Liberation Sans,sans-serif" font-size="16.8" fill="#000" text-anchor="middle"><text transform="translate(925 375) scale(.84 1)">Weg</text><text transform="translate(914.600 433.300) scale(.84 1)">Beton</text><text transform="translate(848 573.500) scale(.84 1)">Beton</text></g><rect x="777.500" y="695.500" width="1" height="1" fill="#333"/><path d="M548 943.800 H584 M591 951 V988" stroke="#9a7a8a" stroke-width="1.200" stroke-dasharray="1.500 2.500"/><rect x="581.500" y="934.500" width="19" height="19" fill="none" stroke="#555" stroke-width=".8" stroke-dasharray="1.500 1.500"/><path d="M591 897.500 V937" stroke="#21a83a" stroke-width="2"/><path d="M598 943.800 H637" stroke="#e8131e" stroke-width="2"/><rect x="584.500" y="937.300" width="13.500" height="13.500" fill="#1414d8"/><rect x="590.300" y="943" width="1.500" height="1.500" fill="#fff"/><g font-family="Liberation Sans,sans-serif" font-weight="bold" font-size="14.5" stroke-width=".35"><text x="591" y="892" stroke="#21a83a" text-anchor="middle" fill="#21a83a">Y</text><text x="646.500" y="949" text-anchor="middle" fill="#cc1820" stroke="#cc1820">X</text><text x="575.500" y="965.500" text-anchor="middle" fill="#1414c8" stroke="#1414c8">Z</text></g><path d="M551.8 1020.6 L555.6 1020.6 L555.6 1016.8 Z M551.8 1005.4 L555.6 1005.4 L555.6 1009.2 Z M544.2 1020.6 L540.4 1020.6 L540.4 1016.8 Z M544.2 1005.4 L540.4 1005.4 L540.4 1009.2 Z M545.4 1004.8 h5.2 l-2.6 2.8 Z M545.4 1021.2 h5.2 l-2.6 -2.8 Z M539.8 1010.4 v5.2 l2.8 -2.6 Z M556.2 1010.4 v5.2 l-2.8 -2.6 Z" fill="#3d5682"/><rect x="545.2" y="1010.2" width="5.600" height="5.600" fill="#f59aa0" stroke="#d02030" stroke-width="1"/></svg>
<svg class="vp" style="left:1213px;top:129px" width="678" height="447" viewBox="1213 129 678 447"><defs><linearGradient id="g3a" x1="0" x2="1"><stop offset="0" stop-color="#b4b4b4"/><stop offset="1" stop-color="#9c9c9c"/></linearGradient></defs><path d="M1322 273.1 C1330.1 273.1,1353.6 273.1,1370.7 273.1 C1387.8 273.1,1404.6 272.6,1424.4 273.1 C1444.2 273.6,1465.0 274.8,1489.3 275.9 C1513.6 277.0,1540.6 277.6,1570.0 279.6 C1599.4 281.6,1649.7 286.6,1665.6 288.0 L1798.9 379.6 L1884.6 443.5 L1547.8 522.6 L1482.2 354.9 L1245.4 360.7 Z" fill="#d0d0d0" filter="url(#fconc3)"/><path d="M1324.4 269.1 C1330.8 268.9,1343.9 268.2,1363.0 268.0 C1382.1 267.8,1414.8 267.6,1439.0 268.0 C1463.2 268.4,1486.2 269.4,1508.0 270.4 C1529.8 271.4,1542.0 271.6,1570.0 274.0 C1598.0 276.4,1658.1 282.8,1675.7 284.6 L1665.6 288 C1649.7 286.6,1599.4 281.6,1570.0 279.6 C1540.6 277.6,1513.6 277.0,1489.3 275.9 C1465.0 274.8,1444.2 273.6,1424.4 273.1 C1404.6 272.6,1387.8 273.1,1370.7 273.1 C1353.6 273.1,1330.1 273.1,1322.0 273.1 Z" fill="#9f9f9f"/><path d="M1675.7 284.6 L1816.5 375.6 L1816.5 378.7 L1802.6 381.9 L1798.9 379.6 L1665.6 288 Z" fill="#9b9b9b"/><path d="M1816.500 375.600 L1816.500 378.700 L1802.600 381.900 L1800 380 Z" fill="#777"/><path d="M1245.400 360.700 L1482.200 354.900 L1482.200 364.100 L1248 372.600 Z" fill="url(#g3a)"/><path d="M1482.200 354.900 L1547.800 522.600 L1546.600 536.600 L1482.200 364.100 Z" fill="#484848"/><path d="M1547.800 522.600 L1884.600 443.500 L1882.200 455 L1546.600 536.600 Z" fill="url(#g3a)"/><g fill="none" stroke="#111" stroke-width="1" stroke-linejoin="round"><path d="M1322 273.1 C1330.1 273.1,1353.6 273.1,1370.7 273.1 C1387.8 273.1,1404.6 272.6,1424.4 273.1 C1444.2 273.6,1465.0 274.8,1489.3 275.9 C1513.6 277.0,1540.6 277.6,1570.0 279.6 C1599.4 281.6,1649.7 286.6,1665.6 288.0 L1798.9 379.6 L1884.6 443.5 L1547.8 522.6 L1482.2 354.9 L1245.4 360.7 Z"/><path d="M1324.4 269.1 C1330.8 268.9,1343.9 268.2,1363.0 268.0 C1382.1 267.8,1414.8 267.6,1439.0 268.0 C1463.2 268.4,1486.2 269.4,1508.0 270.4 C1529.8 271.4,1542.0 271.6,1570.0 274.0 C1598.0 276.4,1658.1 282.8,1675.7 284.6 L1665.6 288 C1649.7 286.6,1599.4 281.6,1570.0 279.6 C1540.6 277.6,1513.6 277.0,1489.3 275.9 C1465.0 274.8,1444.2 273.6,1424.4 273.1 C1404.6 272.6,1387.8 273.1,1370.7 273.1 C1353.6 273.1,1330.1 273.1,1322.0 273.1 Z"/><path d="M1675.7 284.6 L1816.5 375.6 L1816.5 378.7 L1802.6 381.9 L1798.9 379.6 L1665.6 288 Z"/><path d="M1245.400 360.700 L1248 372.600 L1482.200 364.100 L1546.600 536.600 L1882.200 455 L1884.600 443.500 M1547.800 522.600 L1546.600 536.600 M1482.200 354.900 V364.100 M1802.600 381.900 L1816.500 378.700"/><path d="M1304.4 293 C1316.7 293.0,1356.5 292.4,1378.0 293.0 C1399.5 293.6,1415.2 294.8,1433.7 296.3 C1452.2 297.8,1473.2 300.2,1489.3 301.9 C1505.3 303.6,1516.5 304.6,1530.0 306.5 C1543.5 308.4,1558.8 310.5,1570.0 313.0 C1581.2 315.5,1586.3 316.7,1597.0 321.3 C1607.7 325.9,1622.9 333.8,1634.0 340.7 C1645.1 347.6,1654.4 355.0,1663.7 363.0 C1673.0 371.0,1680.6 379.9,1689.6 388.9 C1698.5 397.8,1706.9 406.7,1717.4 416.7 C1727.9 426.7,1743.0 440.2,1752.6 449.0 C1762.2 457.8,1771.3 466.1,1775.1 469.5 L1774 480.900"/></g><path d="M1234 498 L1266 494 M1276 504 V522" stroke="#b08a8a" stroke-width="1.200" stroke-dasharray="1.500 2.500"/><path d="M1275 443 V486" stroke="#1414d8" stroke-width="2"/><path d="M1286 491 L1310.500 486.500" stroke="#e8131e" stroke-width="2"/><path d="M1263 479 L1270 488" stroke="#21a83a" stroke-width="2"/><path d="M1264.500 484 L1269 487.500 V504.500 L1264.500 500 Z" fill="#e88a8a"/><path d="M1264.500 484 L1282 483 L1286.500 487.500 H1269 Z" fill="#1a2ad8"/><rect x="1269" y="487.500" width="17.500" height="17" fill="#5ef06a"/><ellipse cx="1276" cy="495" rx="13" ry="12" fill="none" stroke="#666" stroke-width=".8" stroke-dasharray="1.500 1.800"/><g font-family="Liberation Sans,sans-serif" font-weight="bold" font-size="14.5" stroke-width=".35"><text x="1275" y="437" text-anchor="middle" fill="#1414c8" stroke="#1414c8">Z</text><text x="1321" y="492" text-anchor="middle" fill="#cc1820" stroke="#cc1820">X</text><text x="1259.500" y="478" text-anchor="middle" fill="#21a83a" stroke="#21a83a">Y</text></g><path d="M1232.4 567.8 L1236.2 567.8 L1236.2 564.0 Z M1232.4 552.6 L1236.2 552.6 L1236.2 556.4 Z M1224.8 567.8 L1221.0 567.8 L1221.0 564.0 Z M1224.8 552.6 L1221.0 552.6 L1221.0 556.4 Z M1226.0 552.0 h5.2 l-2.6 2.8 Z M1226.0 568.4 h5.2 l-2.6 -2.8 Z M1220.4 557.6 v5.2 l2.8 -2.6 Z M1236.8 557.6 v5.2 l-2.8 -2.6 Z" fill="#3d5682"/><rect x="1225.8" y="557.4" width="5.600" height="5.600" fill="#e8e8e8" stroke="#aaa" stroke-width="1"/></svg>
<svg class="vp" style="left:1213px;top:579px" width="678" height="449" viewBox="1213 579 678 449"><defs><pattern id="h1" width="23" height="4" patternUnits="userSpaceOnUse"><path d="M0 .5 H9 M11 .5 H14 M16 .5 H22 M2 2.500 H6 M8 2.500 H17 M19 2.500 H21" stroke="#000" stroke-width="1"/></pattern>
<pattern id="h2" width="17" height="2" patternUnits="userSpaceOnUse"><path d="M0 .5 H6 M7.500 .5 H12 M13 .5 H16 M1 1.500 H3 M8 1.500 H10" stroke="#000" stroke-width="1"/></pattern>
<pattern id="h3" width="31" height="5" patternUnits="userSpaceOnUse"><path d="M0 .5 H31 M3 3 H9 M14 3 H20" stroke="#000" stroke-width=".8"/></pattern>
<pattern id="hl" width="8" height="2" patternUnits="userSpaceOnUse"><rect width="8" height="1" fill="#1c1c1c"/></pattern><pattern id="hl2" width="8" height="2" patternUnits="userSpaceOnUse"><rect y="1" width="8" height="1" fill="#1c1c1c"/></pattern>
<pattern id="h4" width="9" height="3" patternUnits="userSpaceOnUse"><path d="M0 .5 H4 M5 2 H8" stroke="#aaa" stroke-width="1"/></pattern></defs><path d="M1257.500 781.500 L1497.400 788.500 V820.500 L1257.500 795 Z" fill="url(#hl)" filter="url(#fh2)"/><path d="M1497.400 788.500 L1698.100 794.400 V841.300 H1497.400 Z" fill="url(#hl)" filter="url(#fh1)"/><path d="M1698.100 794.400 L1819.500 798 V841.300 H1698.100 Z" fill="url(#hl)" filter="url(#fh3)"/><path d="M1257.500 781.500 L1819.500 798 V803 L1497.400 798 L1257.500 788 Z" fill="url(#hl2)" filter="url(#fh2)"/><path d="M1819.500 798 H1846.800 V827.300 H1819.500 Z" fill="url(#h4)"/><g fill="none" stroke="#000" stroke-width="1"><path d="M1243.500 781.500 H1257.500 M1257.500 768 V795 L1497.400 820.500 M1280.500 768 V795 M1293.500 768 V796 M1394.500 774 V800 M1257.500 781.500 L1819.500 798 M1497.400 795 V841.300 H1819.500 V785 M1483.500 827.300 H1833 M1698.100 795.500 V841.300 M1819.500 798 H1859.500 M1819.500 816.500 H1859.500 M1819.500 827.300 H1833 M1846.800 785 V828.500 M1497.400 806 C1560 803,1650 806,1698 822 M1698 826 C1740 818,1790 822,1819.500 838"/></g><path d="M1231 944 H1265 M1272 952 V988" stroke="#b08a8a" stroke-width="1.200" stroke-dasharray="1.500 2.500"/><rect x="1262.500" y="934.500" width="19" height="19" fill="none" stroke="#555" stroke-width=".8" stroke-dasharray="1.500 1.500"/><path d="M1272 898 V937.500" stroke="#1414d8" stroke-width="2"/><path d="M1279 944 H1317" stroke="#e8131e" stroke-width="2"/><rect x="1265.300" y="937.300" width="14" height="14" fill="#5ef06a"/><g font-family="Liberation Sans,sans-serif" font-weight="bold" font-size="14.5" stroke-width=".35"><text x="1272" y="892.500" text-anchor="middle" fill="#1414c8" stroke="#1414c8">Z</text><text x="1327.500" y="949" text-anchor="middle" fill="#cc1820" stroke="#cc1820">X</text><text x="1256.500" y="964.500" text-anchor="middle" fill="#21a83a" stroke="#21a83a">Y</text></g><path d="M1233.1 1020.5 L1236.9 1020.5 L1236.9 1016.7 Z M1233.1 1005.3 L1236.9 1005.3 L1236.9 1009.1 Z M1225.5 1020.5 L1221.7 1020.5 L1221.7 1016.7 Z M1225.5 1005.3 L1221.7 1005.3 L1221.7 1009.1 Z M1226.7 1004.7 h5.2 l-2.6 2.8 Z M1226.7 1021.1 h5.2 l-2.6 -2.8 Z M1221.1 1010.3 v5.2 l2.8 -2.6 Z M1237.5 1010.3 v5.2 l-2.8 -2.6 Z" fill="#3d5682"/><rect x="1226.5" y="1010.1" width="5.600" height="5.600" fill="#e8e8e8" stroke="#aaa" stroke-width="1"/></svg>
<div class="a" style="left:4px;top:1026px;width:1912px;height:32px;background:#fff"></div>
<div class="a" style="left:773px;top:1031px;width:1143px;height:27px;background:#dde6f1;border-top:1px solid #c5ccd6"></div>
<div class="a" style="left:4px;top:1030px;width:769px;height:29px;background:#fff;border:1px solid #8a929d;border-right-color:#c5ccd6"></div>
<div class="a" style="left:8px;top:1033px;width:3px;height:23px;border-right:1px solid #8a8a8a;border-bottom:1px solid #8a8a8a"></div>
<div class="t" style="left:16px;top:1037px;font-weight:bold;font-size:12px;letter-spacing:0.03px">&lt;PatchWork ändern&gt; Stilpunkt wählen... (SHIFT+Klick für Verschieben, STRG+Klick für Kopie verschieben, ALT+Klick für Löschen)</div>
<div class="a" style="left:4px;top:1059px;width:1912px;height:19px;background:#e4e5e8"></div>
<div class="st" style="left:5.5px;transform-origin:0 50%;transform:scaleX(0.963)">Drücken Sie F1, um Hilfe zu erhalten.</div>
<div class="st" style="left:481px;transform-origin:0 50%;transform:scaleX(0.966)">Land:</div>
<div class="st" style="left:518.5px;transform-origin:0 50%;transform:scaleX(0.929)">Schweiz</div>
<div class="st" style="left:666px;transform-origin:0 50%;transform:scaleX(0.974)">Grafische Überschreibung:</div>
<div class="st" style="left:813.5px;transform-origin:0 50%;transform:scaleX(0.919)">Aus</div>
<div class="st" style="left:1024px;transform-origin:0 50%;transform:scaleX(1.004)">Zeichnungstyp:</div>
<div class="st" style="left:1114px;transform-origin:0 50%;transform:scaleX(1.029)">Baueingabe  -  Neubau farbig</div>
<div class="st" style="left:1352.8px;transform-origin:0 50%;transform:scaleX(0.984)">Maßstab:</div>
<div class="st" style="left:1410.6px;transform-origin:0 50%;transform:scaleX(0.893)">1 : 50</div>
<div class="st" style="left:1478.4px;transform-origin:0 50%;transform:scaleX(0.937)">Länge:</div>
<div class="st" style="left:1521.6px;transform-origin:0 50%;transform:scaleX(1.000);color:#aaa">m</div>
<div class="st" style="left:1571.6px;transform-origin:0 50%;transform:scaleX(0.969)">Winkel:</div>
<div class="st" style="left:1617.8px;transform-origin:0 50%;transform:scaleX(0.906)">0.000</div>
<div class="st" style="left:1665.3px;transform-origin:0 50%;transform:scaleX(0.934);color:#aaa">deg</div>
<div class="st" style="left:1715.3px;transform-origin:0 50%;transform:scaleX(0.893)">%:</div>
<div class="st" style="left:1737px;transform-origin:0 50%;transform:scaleX(1.000)">1</div>
<div class="st" style="left:1787.2px;transform-origin:0 50%;transform:scaleX(1.001)">Benachrichtungen</div>
<div class="a" style="left:1348px;top:1061px;width:1px;height:15px;background:#cfd2d6"></div>
<div class="a" style="left:1475px;top:1061px;width:1px;height:15px;background:#cfd2d6"></div>
<div class="a" style="left:1567px;top:1061px;width:1px;height:15px;background:#cfd2d6"></div>
<div class="a" style="left:1660px;top:1061px;width:1px;height:15px;background:#cfd2d6"></div>
<div class="a" style="left:1712px;top:1061px;width:1px;height:15px;background:#cfd2d6"></div>
<div class="a" style="left:1762px;top:1061px;width:1px;height:15px;background:#cfd2d6"></div>
<svg style="left:1764px;top:1060px" width="20" height="18" viewBox="1764 1060 20 18"><path d="M1767.500 1063.500 H1780.500 V1074 H1776.500 L1774 1077 L1771.500 1074 H1767.500 Z" fill="#fff" stroke="#555" stroke-width="1.100"/><path d="M1774 1065 V1070" stroke="#d02030" stroke-width="1.800"/><rect x="1773.100" y="1071" width="1.800" height="1.800" fill="#d02030"/></svg>
<svg style="left:1905px;top:1066px" width="12" height="12" viewBox="0 0 12 12"><path d="M9 2 h1.500 M6 5 h1.500 M9 5 h1.500 M3 8 h1.500 M6 8 h1.500 M9 8 h1.500" stroke="#aaa" stroke-width="1.500"/></svg>
</body></html>
